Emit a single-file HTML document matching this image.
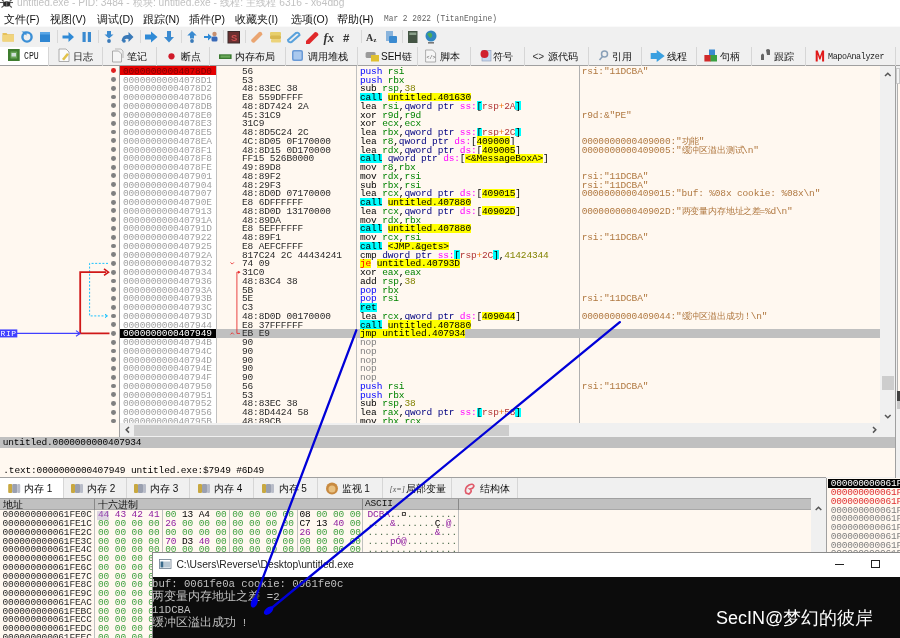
<!DOCTYPE html>
<html><head><meta charset="utf-8">
<style>
*{margin:0;padding:0;box-sizing:border-box}
html,body{width:900px;height:638px;overflow:hidden;background:#f0f0f0;position:relative}
body{font-family:"Liberation Sans",sans-serif;color:#000;filter:blur(0.4px)}
.a{position:absolute}
.mono{font-family:"Liberation Mono",monospace;font-size:9.5px;letter-spacing:-0.15px;white-space:pre;line-height:8.755px}
.row{position:absolute;height:8.755px;white-space:pre}
i{font-style:normal}
.c b{display:inline-block;font-weight:normal;letter-spacing:0}.w555 b{width:5.55px}.w56 b{width:5.6px}.w558 b{width:5.58px}.w55 b{width:5.48px}.w638 b{width:6.375px}
.pp{color:#0000ff}.rg{color:#008300}.v{color:#828200}.sz{color:#000080}.sg{color:#ff00ff}
.sb{}.mr{color:#b03434}.op{color:#f27711}.md{color:#b03434}
.ad{}.cl{}.je{color:#ff0000}.np{color:#808080}
.cmt{color:#b07840}
.ui{white-space:nowrap;color:#111}
.tl{position:absolute;font-size:10px;line-height:12px;white-space:nowrap;color:#111}
.tsep{position:absolute;width:1px;background:#d6d6d6}
.hx{color:#40a040}.hp{color:#9020a0}.hb{color:#000}
</style></head><body>

<div class="a" style="left:0;top:0;width:900px;height:26px;background:#fff"></div>
<div class="a ui" style="left:17px;top:-3.5px;color:#c2c2c2;font-size:10.2px;line-height:12px">untitled.exe - PID: 3484 - <span style="display:inline-block;width:20.40px;white-space:nowrap;letter-spacing:0;">模块</span>: untitled.exe - <span style="display:inline-block;width:20.40px;white-space:nowrap;letter-spacing:0;">线程</span>: <span style="display:inline-block;width:30.60px;white-space:nowrap;letter-spacing:0;">主线程</span> 6316 - x64dbg</div>
<svg class="a" style="left:0;top:0" width="14" height="9"><g stroke="#555" stroke-width="1.1" fill="none"><line x1="0" y1="2.5" x2="13" y2="2.5"/><path d="M4 5.5 l-2.5 2"/><path d="M9.5 5.5 l2.3 2"/><path d="M4 1.5 l-2 -1.5"/><path d="M9.5 1.5 l2 -1.5"/></g><ellipse cx="6.7" cy="3.9" rx="3.6" ry="2.7" fill="#2a2a2a"/><line x1="6.7" y1="1.5" x2="6.7" y2="6.3" stroke="#999" stroke-width="0.7"/></svg>
<div class="a ui" style="left:4px;top:12.5px;font-size:10.5px;line-height:12px"><span style="display:inline-block;width:22.00px;white-space:nowrap;letter-spacing:0;">文件</span>(F)</div>
<div class="a ui" style="left:50px;top:12.5px;font-size:10.5px;line-height:12px"><span style="display:inline-block;width:22.00px;white-space:nowrap;letter-spacing:0;">视图</span>(V)</div>
<div class="a ui" style="left:97px;top:12.5px;font-size:10.5px;line-height:12px"><span style="display:inline-block;width:22.00px;white-space:nowrap;letter-spacing:0;">调试</span>(D)</div>
<div class="a ui" style="left:143px;top:12.5px;font-size:10.5px;line-height:12px"><span style="display:inline-block;width:22.00px;white-space:nowrap;letter-spacing:0;">跟踪</span>(N)</div>
<div class="a ui" style="left:189px;top:12.5px;font-size:10.5px;line-height:12px"><span style="display:inline-block;width:22.00px;white-space:nowrap;letter-spacing:0;">插件</span>(P)</div>
<div class="a ui" style="left:235px;top:12.5px;font-size:10.5px;line-height:12px"><span style="display:inline-block;width:33.00px;white-space:nowrap;letter-spacing:0;">收藏夹</span>(I)</div>
<div class="a ui" style="left:291px;top:12.5px;font-size:10.5px;line-height:12px"><span style="display:inline-block;width:22.00px;white-space:nowrap;letter-spacing:0;">选项</span>(O)</div>
<div class="a ui" style="left:337px;top:12.5px;font-size:10.5px;line-height:12px"><span style="display:inline-block;width:22.00px;white-space:nowrap;letter-spacing:0;">帮助</span>(H)</div>
<div class="a" style="left:384px;top:12.5px;font-family:'Liberation Mono';font-size:9.8px;line-height:11px;color:#606060;white-space:pre;transform:scaleX(0.8);transform-origin:0 0">Mar 2 2022 (TitanEngine)</div>
<div class="a" style="left:0;top:25.5px;width:900px;height:21px;background:#f0f0f0;border-top:1px solid #fafafa;border-bottom:1px solid #d2d2d2"></div>
<div class="a" style="left:56.7px;top:30px;width:1px;height:13px;background:#d8d8d8"></div>
<div class="a" style="left:98px;top:30px;width:1px;height:13px;background:#d8d8d8"></div>
<div class="a" style="left:139.5px;top:30px;width:1px;height:13px;background:#d8d8d8"></div>
<div class="a" style="left:181px;top:30px;width:1px;height:13px;background:#d8d8d8"></div>
<div class="a" style="left:223px;top:30px;width:1px;height:13px;background:#d8d8d8"></div>
<div class="a" style="left:245px;top:30px;width:1px;height:13px;background:#d8d8d8"></div>
<div class="a" style="left:361px;top:30px;width:1px;height:13px;background:#d8d8d8"></div>
<div class="a" style="left:402.4px;top:30px;width:1px;height:13px;background:#d8d8d8"></div>
<svg class="a" style="left:0;top:26px" width="450" height="20">
<!-- folder -->
<path d="M2.5 7 h4 l1 1.2 h6.5 v7.3 h-11.5z" fill="#e6c15a"/><path d="M2.5 9 h11.5 v6.5 h-11.5z" fill="#f1d47c"/>
<!-- restart -->
<circle cx="27" cy="11" r="4.6" fill="none" stroke="#3b8fd6" stroke-width="2.4"/><path d="M21.5 5.5 h5 v4z" fill="#3b8fd6"/>
<!-- stop -->
<rect x="40" y="6" width="10" height="10" fill="#2f86d2"/><rect x="40" y="6" width="10" height="2.5" fill="#5aa6e6"/>
<!-- run arrow -->
<path d="M62.5 9.5 h6 v-3.5 l5.5 5 l-5.5 5 v-3.5 h-6z" fill="#2f8ad6"/>
<!-- pause -->
<rect x="82.5" y="6" width="3.2" height="10" fill="#3a8ad0"/><rect x="87.8" y="6" width="3.2" height="10" fill="#3a8ad0"/>
<!-- step into -->
<path d="M107 5 h4 v3.5 h2.5 l-4.5 4 l-4.5-4 h2.5z" fill="#3a8ad0"/><circle cx="109" cy="15" r="1.9" fill="#3a7ab8"/>
<!-- step over -->
<path d="M121.5 15 q1-7 7-6 v-3 l5 5 l-5 5 v-3 q-4-1-5 2z" fill="#3a7ab8"/><circle cx="124" cy="15" r="1.8" fill="#3a7ab8"/>
<!-- fat right arrow -->
<path d="M145 8.5 h6 v-3 l6.5 5.5 l-6.5 5.5 v-3 h-6z" fill="#2f8ad6"/>
<!-- down arrow -->
<path d="M167 5 h4 v6 h3 l-5 5.5 l-5-5.5 h3z" fill="#3a8ad0"/>
<!-- up arrow dot -->
<path d="M192 5 l4.7 4.5 h-2.7 v3 h-4 v-3 h-2.7z" fill="#3a8ad0"/><circle cx="192" cy="15" r="1.9" fill="#3a7ab8"/>
<!-- arrow person -->
<path d="M204 10 h4 v-2.5 l4 3.5 l-4 3.5 v-2.5 h-4z" fill="#2f8ad6"/><circle cx="214.5" cy="8" r="2.2" fill="#c89070"/><rect x="211.5" y="10.5" width="6" height="5" rx="1.5" fill="#3a6ab8"/>
<!-- S square -->
<rect x="227.5" y="5" width="12.5" height="12.5" fill="#3a2a2a"/><rect x="228.5" y="6" width="10.5" height="10.5" fill="#6a3030"/><text x="231" y="15" font-family="Liberation Sans" font-weight="bold" font-size="9.5" fill="#d05050">S</text>
<!-- bandage -->
<path d="M251 14 l8-8 q3-1 3.5 2.5 l-8 8 q-3 1-3.5-2.5z" fill="#eaa571"/>
<!-- notes -->
<rect x="270" y="6" width="11" height="4" rx="1" fill="#e7cf6b"/><rect x="270" y="9.5" width="11" height="3.5" rx="1" fill="#d8b850"/><rect x="271" y="13" width="10" height="3.5" rx="1" fill="#ecd37a"/>
<!-- paperclip -->
<path d="M288 14 l8-7 q3-1 3.5 2 l-8 7 q-3 1-3.5-2z" fill="none" stroke="#5aa2dc" stroke-width="2"/>
<!-- red pencil -->
<path d="M306 15 l9-9 q3 0 3.5 3 l-9 9 h-3.5z" fill="#e0282a"/>
<!-- fx -->
<text x="323.5" y="15.5" font-family="Liberation Serif" font-style="italic" font-weight="bold" font-size="12.5" fill="#333">fx</text>
<!-- # -->
<text x="343" y="15.5" font-family="Liberation Sans" font-weight="bold" font-size="11.5" fill="#333">#</text>
<!-- A2 -->
<text x="366" y="15" font-family="Liberation Serif" font-weight="bold" font-size="10" fill="#333">A</text><text x="373.5" y="15.5" font-family="Liberation Serif" font-weight="bold" font-size="6.5" fill="#333">z</text>
<!-- doc -->
<rect x="386" y="5" width="7" height="10" fill="#8ab4dc"/><rect x="389" y="10" width="8" height="7" rx="1" fill="#3a8ad0"/>
<!-- calc -->
<rect x="408" y="5" width="9.5" height="12" fill="#445544"/><rect x="409.3" y="6.5" width="7" height="2.5" fill="#8aa08a"/>
<!-- globe -->
<circle cx="431" cy="10" r="5.5" fill="#2f86c2"/><path d="M427 8 q3-3 5 0 q1 3 -2 4z" fill="#4aaa5a"/><rect x="428" y="16" width="6" height="1.6" fill="#777"/>
</svg>
<div class="a" style="left:0;top:46.3px;width:900px;height:20px;background:#f0f0f0;border-bottom:1px solid #a0a0a0"></div>
<div class="a" style="left:0;top:47px;width:48px;height:18.4px;background:#fff"></div>
<div class="tsep" style="left:48px;top:47px;height:19px"></div>
<div class="tsep" style="left:102px;top:47px;height:19px"></div>
<div class="tsep" style="left:155.5px;top:47px;height:19px"></div>
<div class="tsep" style="left:208.5px;top:47px;height:19px"></div>
<div class="tsep" style="left:285px;top:47px;height:19px"></div>
<div class="tsep" style="left:356.7px;top:47px;height:19px"></div>
<div class="tsep" style="left:416.7px;top:47px;height:19px"></div>
<div class="tsep" style="left:470px;top:47px;height:19px"></div>
<div class="tsep" style="left:524px;top:47px;height:19px"></div>
<div class="tsep" style="left:587.5px;top:47px;height:19px"></div>
<div class="tsep" style="left:641.3px;top:47px;height:19px"></div>
<div class="tsep" style="left:696px;top:47px;height:19px"></div>
<div class="tsep" style="left:751px;top:47px;height:19px"></div>
<div class="tsep" style="left:804.7px;top:47px;height:19px"></div>
<div class="tsep" style="left:895px;top:47px;height:19px"></div>
<div class="tl" style="left:73.3px;top:50.5px"><span style="display:inline-block;width:20.00px;white-space:nowrap;letter-spacing:0;">日志</span></div>
<div class="tl" style="left:127.2px;top:50.5px"><span style="display:inline-block;width:20.00px;white-space:nowrap;letter-spacing:0;">笔记</span></div>
<div class="tl" style="left:180.5px;top:50.5px"><span style="display:inline-block;width:20.00px;white-space:nowrap;letter-spacing:0;">断点</span></div>
<div class="tl" style="left:235px;top:50.5px"><span style="display:inline-block;width:40.00px;white-space:nowrap;letter-spacing:0;">内存布局</span></div>
<div class="tl" style="left:307.8px;top:50.5px"><span style="display:inline-block;width:40.00px;white-space:nowrap;letter-spacing:0;">调用堆栈</span></div>
<div class="tl" style="left:381px;top:50.5px">SEH<span style="display:inline-block;width:10.00px;white-space:nowrap;letter-spacing:0;">链</span></div>
<div class="tl" style="left:440px;top:50.5px"><span style="display:inline-block;width:20.00px;white-space:nowrap;letter-spacing:0;">脚本</span></div>
<div class="tl" style="left:493.3px;top:50.5px"><span style="display:inline-block;width:20.00px;white-space:nowrap;letter-spacing:0;">符号</span></div>
<div class="tl" style="left:548px;top:50.5px"><span style="display:inline-block;width:30.00px;white-space:nowrap;letter-spacing:0;">源代码</span></div>
<div class="tl" style="left:612px;top:50.5px"><span style="display:inline-block;width:20.00px;white-space:nowrap;letter-spacing:0;">引用</span></div>
<div class="tl" style="left:666.7px;top:50.5px"><span style="display:inline-block;width:20.00px;white-space:nowrap;letter-spacing:0;">线程</span></div>
<div class="tl" style="left:720px;top:50.5px"><span style="display:inline-block;width:20.00px;white-space:nowrap;letter-spacing:0;">句柄</span></div>
<div class="tl" style="left:774px;top:50.5px"><span style="display:inline-block;width:20.00px;white-space:nowrap;letter-spacing:0;">跟踪</span></div>
<div class="a" style="left:23.5px;top:51px;font-family:'Liberation Mono';font-size:10.5px;line-height:11px;color:#222;transform:scaleX(0.78);transform-origin:0 0;white-space:pre">CPU</div>
<div class="a" style="left:828px;top:51.5px;font-family:'Liberation Mono';font-size:8.4px;line-height:10px;color:#222;white-space:pre;letter-spacing:-0.35px">MapoAnalyzer</div>
<svg class="a" style="left:0;top:46px" width="900" height="20">
<rect x="8" y="3" width="11.7" height="12" fill="#3e7d2e"/><rect x="10.5" y="5.5" width="6.7" height="7" fill="#6aa55a"/><rect x="11.5" y="7" width="4.5" height="3.5" fill="#cfe0d8"/>
<path d="M59 3 h7 l3 3 v9.5 h-10z" fill="#fbfbfb" stroke="#9a9a9a" stroke-width="0.8"/><path d="M62 13 l5-6 l2 1.5 l-5 6z" fill="#e2c24a"/>
<path d="M112.5 5 h6 l3 3 v8 h-9z" fill="#f6f6f6" stroke="#9a9a9a" stroke-width="0.8"/><path d="M115 3 h6 l2 2 v7" fill="none" stroke="#aaa" stroke-width="0.8"/>
<circle cx="171.5" cy="10.3" r="3.1" fill="#d01a2a"/>
<rect x="219" y="8.3" width="12.6" height="4.7" fill="#3a7a30"/><rect x="220.5" y="9.5" width="9.6" height="2.2" fill="#6aa85a"/>
<rect x="292" y="4" width="11" height="11" rx="2" fill="#6a9ad6"/><rect x="293.5" y="5.5" width="8" height="8" rx="1" fill="#a9c8ee"/>
<rect x="365.6" y="6" width="10" height="6" rx="1.5" fill="#9a9a9a"/><rect x="371" y="9" width="8" height="6.5" fill="#e0c030"/>
<path d="M425.6 4 h7 l3 3 v9 h-10z" fill="#f6f6f6" stroke="#9a9a9a" stroke-width="0.8"/><text x="426.5" y="13" font-size="5" font-family="Liberation Mono" fill="#555">&lt;/&gt;</text>
<rect x="482" y="4.5" width="9" height="10.5" fill="#c8d8ee" stroke="#8a9ab8" stroke-width="0.6"/><circle cx="484.5" cy="8" r="4" fill="#d02030"/>
<text x="532.5" y="14" font-size="10" font-family="Liberation Sans" fill="#333">&lt;&gt;</text>
<circle cx="604.5" cy="8" r="3" fill="none" stroke="#8aa0b8" stroke-width="1.5"/><line x1="602.5" y1="10.5" x2="599.5" y2="14" stroke="#8aa0b8" stroke-width="1.6"/>
<path d="M650.7 7 h6 v-3 l8 6 l-8 6 v-3 h-6z" fill="#3aa0e0"/>
<rect x="709" y="3.5" width="6" height="6" fill="#3a8ad0"/><rect x="704.4" y="9" width="6.5" height="6.5" fill="#d02a2a"/><rect x="710.5" y="9" width="6.5" height="6.5" fill="#3aa040"/>
<path d="M761 9 q2-3 3 0 v5 h-3z M766 4 q2-2 4 0 v5 h-3z" fill="#666"/>
<path d="M815.7 15.5 v-11 h2 l2.2 6 l2.2-6 h2 v11 h-2 v-7 l-1.6 5 h-1.2 l-1.6-5 v7z" fill="#e01818"/>
</svg>
<div class="a" style="left:0;top:66.4px;width:880px;height:357.2px;background:#fff8f0"></div>
<div class="a" style="left:120px;top:66.4px;width:95.8px;height:357.2px;background:#fff"></div>
<div class="a" style="left:215.8px;top:66.4px;width:1px;height:357.2px;background:#c0c0c0"></div>
<div class="a" style="left:356px;top:66.4px;width:1px;height:357.2px;background:#c0c0c0"></div>
<div class="a" style="left:579px;top:66.4px;width:1px;height:357.2px;background:#b0b0b0"></div>
<div class="a" style="left:0;top:423px;width:119px;height:14.2px;background:#fff8f0"></div>
<div class="a" style="left:119px;top:66.4px;width:1px;height:371px;background:#a0a0a0"></div>
<div class="a" style="left:120px;top:66.40px;width:95.8px;height:8.76px;background:#e40000"></div>
<div class="row mono c w555" style="left:123px;top:67.80px;color:#800000"><b>0</b><b>0</b><b>0</b><b>0</b><b>0</b><b>0</b><b>0</b><b>0</b><b>0</b><b>0</b><b>4</b><b>0</b><b>7</b><b>8</b><b>D</b><b>0</b></div>
<div class="row mono c w555" style="left:242px;top:67.80px;color:#2a2a2a"><b>5</b><b>6</b></div>
<div class="row mono c w555" style="left:360px;top:67.80px"><i class="pp"><b>p</b><b>u</b><b>s</b><b>h</b></i><b> </b><i class="rg"><b>r</b><b>s</b><b>i</b></i></div>
<div class="row mono cmt c w555" style="left:581.7px;top:67.80px"><b>r</b><b>s</b><b>i</b><b>:</b><b>"</b><b>1</b><b>1</b><b>D</b><b>C</b><b>B</b><b>A</b><b>"</b></div>
<div class="a" style="left:110.9px;top:68.40px;width:4.8px;height:4.8px;border-radius:50%;background:#e02020"></div>
<div class="row mono c w555" style="left:123px;top:76.56px;color:#a0a0a0"><b>0</b><b>0</b><b>0</b><b>0</b><b>0</b><b>0</b><b>0</b><b>0</b><b>0</b><b>0</b><b>4</b><b>0</b><b>7</b><b>8</b><b>D</b><b>1</b></div>
<div class="row mono c w555" style="left:242px;top:76.56px;color:#2a2a2a"><b>5</b><b>3</b></div>
<div class="row mono c w555" style="left:360px;top:76.56px"><i class="pp"><b>p</b><b>u</b><b>s</b><b>h</b></i><b> </b><i class="rg"><b>r</b><b>b</b><b>x</b></i></div>
<div class="a" style="left:110.9px;top:77.16px;width:4.8px;height:4.8px;border-radius:50%;background:#808080"></div>
<div class="row mono c w555" style="left:123px;top:85.31px;color:#a0a0a0"><b>0</b><b>0</b><b>0</b><b>0</b><b>0</b><b>0</b><b>0</b><b>0</b><b>0</b><b>0</b><b>4</b><b>0</b><b>7</b><b>8</b><b>D</b><b>2</b></div>
<div class="row mono c w555" style="left:242px;top:85.31px;color:#2a2a2a"><b>4</b><b>8</b><b>:</b><b>8</b><b>3</b><b>E</b><b>C</b><b> </b><b>3</b><b>8</b></div>
<div class="row mono c w555" style="left:360px;top:85.31px"><b>s</b><b>u</b><b>b</b><b> </b><i class="rg"><b>r</b><b>s</b><b>p</b></i><b>,</b><i class="v"><b>3</b><b>8</b></i></div>
<div class="a" style="left:110.9px;top:85.91px;width:4.8px;height:4.8px;border-radius:50%;background:#808080"></div>
<div class="row mono c w555" style="left:123px;top:94.07px;color:#a0a0a0"><b>0</b><b>0</b><b>0</b><b>0</b><b>0</b><b>0</b><b>0</b><b>0</b><b>0</b><b>0</b><b>4</b><b>0</b><b>7</b><b>8</b><b>D</b><b>6</b></div>
<div class="row mono c w555" style="left:242px;top:94.07px;color:#2a2a2a"><b>E</b><b>8</b><b> </b><b>5</b><b>5</b><b>9</b><b>D</b><b>F</b><b>F</b><b>F</b><b>F</b></div>
<div class="a" style="left:360.00px;top:92.67px;width:22.20px;height:8.76px;background:#00ffff"></div>
<div class="a" style="left:387.75px;top:92.67px;width:83.25px;height:8.76px;background:#ffff00"></div>
<div class="row mono c w555" style="left:360px;top:94.07px"><i class="cl"><b>c</b><b>a</b><b>l</b><b>l</b></i><b> </b><i class="ad"><b>u</b><b>n</b><b>t</b><b>i</b><b>t</b><b>l</b><b>e</b><b>d</b><b>.</b><b>4</b><b>0</b><b>1</b><b>6</b><b>3</b><b>0</b></i></div>
<div class="a" style="left:110.9px;top:94.67px;width:4.8px;height:4.8px;border-radius:50%;background:#808080"></div>
<div class="row mono c w555" style="left:123px;top:102.82px;color:#a0a0a0"><b>0</b><b>0</b><b>0</b><b>0</b><b>0</b><b>0</b><b>0</b><b>0</b><b>0</b><b>0</b><b>4</b><b>0</b><b>7</b><b>8</b><b>D</b><b>B</b></div>
<div class="row mono c w555" style="left:242px;top:102.82px;color:#2a2a2a"><b>4</b><b>8</b><b>:</b><b>8</b><b>D</b><b>7</b><b>4</b><b>2</b><b>4</b><b> </b><b>2</b><b>A</b></div>
<div class="a" style="left:476.55px;top:101.42px;width:5.55px;height:8.76px;background:#00ffff"></div>
<div class="a" style="left:515.40px;top:101.42px;width:5.55px;height:8.76px;background:#00ffff"></div>
<div class="row mono c w555" style="left:360px;top:102.82px"><b>l</b><b>e</b><b>a</b><b> </b><i class="rg"><b>r</b><b>s</b><b>i</b></i><b>,</b><i class="sz"><b>q</b><b>w</b><b>o</b><b>r</b><b>d</b><b> </b><b>p</b><b>t</b><b>r</b></i><b> </b><i class="sg"><b>s</b><b>s</b><b>:</b></i><i class="sb"><b>[</b></i><i class="mr"><b>r</b><b>s</b><b>p</b></i><i class="op"><b>+</b></i><i class="md"><b>2</b><b>A</b></i><i class="sb"><b>]</b></i></div>
<div class="a" style="left:110.9px;top:103.42px;width:4.8px;height:4.8px;border-radius:50%;background:#808080"></div>
<div class="row mono c w555" style="left:123px;top:111.58px;color:#a0a0a0"><b>0</b><b>0</b><b>0</b><b>0</b><b>0</b><b>0</b><b>0</b><b>0</b><b>0</b><b>0</b><b>4</b><b>0</b><b>7</b><b>8</b><b>E</b><b>0</b></div>
<div class="row mono c w555" style="left:242px;top:111.58px;color:#2a2a2a"><b>4</b><b>5</b><b>:</b><b>3</b><b>1</b><b>C</b><b>9</b></div>
<div class="row mono c w555" style="left:360px;top:111.58px"><b>x</b><b>o</b><b>r</b><b> </b><i class="rg"><b>r</b><b>9</b><b>d</b></i><b>,</b><i class="rg"><b>r</b><b>9</b><b>d</b></i></div>
<div class="row mono cmt c w555" style="left:581.7px;top:111.58px"><b>r</b><b>9</b><b>d</b><b>:</b><b>&amp;</b><b>"</b><b>P</b><b>E</b><b>"</b></div>
<div class="a" style="left:110.9px;top:112.18px;width:4.8px;height:4.8px;border-radius:50%;background:#808080"></div>
<div class="row mono c w555" style="left:123px;top:120.33px;color:#a0a0a0"><b>0</b><b>0</b><b>0</b><b>0</b><b>0</b><b>0</b><b>0</b><b>0</b><b>0</b><b>0</b><b>4</b><b>0</b><b>7</b><b>8</b><b>E</b><b>3</b></div>
<div class="row mono c w555" style="left:242px;top:120.33px;color:#2a2a2a"><b>3</b><b>1</b><b>C</b><b>9</b></div>
<div class="row mono c w555" style="left:360px;top:120.33px"><b>x</b><b>o</b><b>r</b><b> </b><i class="rg"><b>e</b><b>c</b><b>x</b></i><b>,</b><i class="rg"><b>e</b><b>c</b><b>x</b></i></div>
<div class="a" style="left:110.9px;top:120.93px;width:4.8px;height:4.8px;border-radius:50%;background:#808080"></div>
<div class="row mono c w555" style="left:123px;top:129.09px;color:#a0a0a0"><b>0</b><b>0</b><b>0</b><b>0</b><b>0</b><b>0</b><b>0</b><b>0</b><b>0</b><b>0</b><b>4</b><b>0</b><b>7</b><b>8</b><b>E</b><b>5</b></div>
<div class="row mono c w555" style="left:242px;top:129.09px;color:#2a2a2a"><b>4</b><b>8</b><b>:</b><b>8</b><b>D</b><b>5</b><b>C</b><b>2</b><b>4</b><b> </b><b>2</b><b>C</b></div>
<div class="a" style="left:476.55px;top:127.69px;width:5.55px;height:8.76px;background:#00ffff"></div>
<div class="a" style="left:515.40px;top:127.69px;width:5.55px;height:8.76px;background:#00ffff"></div>
<div class="row mono c w555" style="left:360px;top:129.09px"><b>l</b><b>e</b><b>a</b><b> </b><i class="rg"><b>r</b><b>b</b><b>x</b></i><b>,</b><i class="sz"><b>q</b><b>w</b><b>o</b><b>r</b><b>d</b><b> </b><b>p</b><b>t</b><b>r</b></i><b> </b><i class="sg"><b>s</b><b>s</b><b>:</b></i><i class="sb"><b>[</b></i><i class="mr"><b>r</b><b>s</b><b>p</b></i><i class="op"><b>+</b></i><i class="md"><b>2</b><b>C</b></i><i class="sb"><b>]</b></i></div>
<div class="a" style="left:110.9px;top:129.69px;width:4.8px;height:4.8px;border-radius:50%;background:#808080"></div>
<div class="row mono c w555" style="left:123px;top:137.84px;color:#a0a0a0"><b>0</b><b>0</b><b>0</b><b>0</b><b>0</b><b>0</b><b>0</b><b>0</b><b>0</b><b>0</b><b>4</b><b>0</b><b>7</b><b>8</b><b>E</b><b>A</b></div>
<div class="row mono c w555" style="left:242px;top:137.84px;color:#2a2a2a"><b>4</b><b>C</b><b>:</b><b>8</b><b>D</b><b>0</b><b>5</b><b> </b><b>0</b><b>F</b><b>1</b><b>7</b><b>0</b><b>0</b><b>0</b><b>0</b></div>
<div class="a" style="left:476.55px;top:136.44px;width:33.30px;height:8.76px;background:#ffff00"></div>
<div class="row mono c w555" style="left:360px;top:137.84px"><b>l</b><b>e</b><b>a</b><b> </b><i class="rg"><b>r</b><b>8</b></i><b>,</b><i class="sz"><b>q</b><b>w</b><b>o</b><b>r</b><b>d</b><b> </b><b>p</b><b>t</b><b>r</b></i><b> </b><i class="sg"><b>d</b><b>s</b><b>:</b></i><b>[</b><i class="ad"><b>4</b><b>0</b><b>9</b><b>0</b><b>0</b><b>0</b></i><b>]</b></div>
<div class="row mono cmt c w555" style="left:581.7px;top:137.84px"><b>0</b><b>0</b><b>0</b><b>0</b><b>0</b><b>0</b><b>0</b><b>0</b><b>0</b><b>0</b><b>4</b><b>0</b><b>9</b><b>0</b><b>0</b><b>0</b><b>:</b><b>"</b><span style="display:inline-block;width:17.30px;white-space:nowrap;font-size:8.6px">功能</span><b>"</b></div>
<div class="a" style="left:110.9px;top:138.44px;width:4.8px;height:4.8px;border-radius:50%;background:#808080"></div>
<div class="row mono c w555" style="left:123px;top:146.59px;color:#a0a0a0"><b>0</b><b>0</b><b>0</b><b>0</b><b>0</b><b>0</b><b>0</b><b>0</b><b>0</b><b>0</b><b>4</b><b>0</b><b>7</b><b>8</b><b>F</b><b>1</b></div>
<div class="row mono c w555" style="left:242px;top:146.59px;color:#2a2a2a"><b>4</b><b>8</b><b>:</b><b>8</b><b>D</b><b>1</b><b>5</b><b> </b><b>0</b><b>D</b><b>1</b><b>7</b><b>0</b><b>0</b><b>0</b><b>0</b></div>
<div class="a" style="left:482.10px;top:145.19px;width:33.30px;height:8.76px;background:#ffff00"></div>
<div class="row mono c w555" style="left:360px;top:146.59px"><b>l</b><b>e</b><b>a</b><b> </b><i class="rg"><b>r</b><b>d</b><b>x</b></i><b>,</b><i class="sz"><b>q</b><b>w</b><b>o</b><b>r</b><b>d</b><b> </b><b>p</b><b>t</b><b>r</b></i><b> </b><i class="sg"><b>d</b><b>s</b><b>:</b></i><b>[</b><i class="ad"><b>4</b><b>0</b><b>9</b><b>0</b><b>0</b><b>5</b></i><b>]</b></div>
<div class="row mono cmt c w555" style="left:581.7px;top:146.59px"><b>0</b><b>0</b><b>0</b><b>0</b><b>0</b><b>0</b><b>0</b><b>0</b><b>0</b><b>0</b><b>4</b><b>0</b><b>9</b><b>0</b><b>0</b><b>5</b><b>:</b><b>"</b><span style="display:inline-block;width:60.55px;white-space:nowrap;font-size:8.6px">缓冲区溢出测试</span><b>\</b><b>n</b><b>"</b></div>
<div class="a" style="left:110.9px;top:147.19px;width:4.8px;height:4.8px;border-radius:50%;background:#808080"></div>
<div class="row mono c w555" style="left:123px;top:155.35px;color:#a0a0a0"><b>0</b><b>0</b><b>0</b><b>0</b><b>0</b><b>0</b><b>0</b><b>0</b><b>0</b><b>0</b><b>4</b><b>0</b><b>7</b><b>8</b><b>F</b><b>8</b></div>
<div class="row mono c w555" style="left:242px;top:155.35px;color:#2a2a2a"><b>F</b><b>F</b><b>1</b><b>5</b><b> </b><b>5</b><b>2</b><b>6</b><b>B</b><b>0</b><b>0</b><b>0</b><b>0</b></div>
<div class="a" style="left:360.00px;top:153.95px;width:22.20px;height:8.76px;background:#00ffff"></div>
<div class="a" style="left:465.45px;top:153.95px;width:77.70px;height:8.76px;background:#ffff00"></div>
<div class="row mono c w555" style="left:360px;top:155.35px"><i class="cl"><b>c</b><b>a</b><b>l</b><b>l</b></i><b> </b><i class="sz"><b>q</b><b>w</b><b>o</b><b>r</b><b>d</b><b> </b><b>p</b><b>t</b><b>r</b></i><b> </b><i class="sg"><b>d</b><b>s</b><b>:</b></i><b>[</b><i class="ad"><b>&lt;</b><b>&amp;</b><b>M</b><b>e</b><b>s</b><b>s</b><b>a</b><b>g</b><b>e</b><b>B</b><b>o</b><b>x</b><b>A</b><b>&gt;</b></i><b>]</b></div>
<div class="a" style="left:110.9px;top:155.95px;width:4.8px;height:4.8px;border-radius:50%;background:#808080"></div>
<div class="row mono c w555" style="left:123px;top:164.11px;color:#a0a0a0"><b>0</b><b>0</b><b>0</b><b>0</b><b>0</b><b>0</b><b>0</b><b>0</b><b>0</b><b>0</b><b>4</b><b>0</b><b>7</b><b>8</b><b>F</b><b>E</b></div>
<div class="row mono c w555" style="left:242px;top:164.11px;color:#2a2a2a"><b>4</b><b>9</b><b>:</b><b>8</b><b>9</b><b>D</b><b>8</b></div>
<div class="row mono c w555" style="left:360px;top:164.11px"><b>m</b><b>o</b><b>v</b><b> </b><i class="rg"><b>r</b><b>8</b></i><b>,</b><i class="rg"><b>r</b><b>b</b><b>x</b></i></div>
<div class="a" style="left:110.9px;top:164.71px;width:4.8px;height:4.8px;border-radius:50%;background:#808080"></div>
<div class="row mono c w555" style="left:123px;top:172.86px;color:#a0a0a0"><b>0</b><b>0</b><b>0</b><b>0</b><b>0</b><b>0</b><b>0</b><b>0</b><b>0</b><b>0</b><b>4</b><b>0</b><b>7</b><b>9</b><b>0</b><b>1</b></div>
<div class="row mono c w555" style="left:242px;top:172.86px;color:#2a2a2a"><b>4</b><b>8</b><b>:</b><b>8</b><b>9</b><b>F</b><b>2</b></div>
<div class="row mono c w555" style="left:360px;top:172.86px"><b>m</b><b>o</b><b>v</b><b> </b><i class="rg"><b>r</b><b>d</b><b>x</b></i><b>,</b><i class="rg"><b>r</b><b>s</b><b>i</b></i></div>
<div class="row mono cmt c w555" style="left:581.7px;top:172.86px"><b>r</b><b>s</b><b>i</b><b>:</b><b>"</b><b>1</b><b>1</b><b>D</b><b>C</b><b>B</b><b>A</b><b>"</b></div>
<div class="a" style="left:110.9px;top:173.46px;width:4.8px;height:4.8px;border-radius:50%;background:#808080"></div>
<div class="row mono c w555" style="left:123px;top:181.62px;color:#a0a0a0"><b>0</b><b>0</b><b>0</b><b>0</b><b>0</b><b>0</b><b>0</b><b>0</b><b>0</b><b>0</b><b>4</b><b>0</b><b>7</b><b>9</b><b>0</b><b>4</b></div>
<div class="row mono c w555" style="left:242px;top:181.62px;color:#2a2a2a"><b>4</b><b>8</b><b>:</b><b>2</b><b>9</b><b>F</b><b>3</b></div>
<div class="row mono c w555" style="left:360px;top:181.62px"><b>s</b><b>u</b><b>b</b><b> </b><i class="rg"><b>r</b><b>b</b><b>x</b></i><b>,</b><i class="rg"><b>r</b><b>s</b><b>i</b></i></div>
<div class="row mono cmt c w555" style="left:581.7px;top:181.62px"><b>r</b><b>s</b><b>i</b><b>:</b><b>"</b><b>1</b><b>1</b><b>D</b><b>C</b><b>B</b><b>A</b><b>"</b></div>
<div class="a" style="left:110.9px;top:182.22px;width:4.8px;height:4.8px;border-radius:50%;background:#808080"></div>
<div class="row mono c w555" style="left:123px;top:190.37px;color:#a0a0a0"><b>0</b><b>0</b><b>0</b><b>0</b><b>0</b><b>0</b><b>0</b><b>0</b><b>0</b><b>0</b><b>4</b><b>0</b><b>7</b><b>9</b><b>0</b><b>7</b></div>
<div class="row mono c w555" style="left:242px;top:190.37px;color:#2a2a2a"><b>4</b><b>8</b><b>:</b><b>8</b><b>D</b><b>0</b><b>D</b><b> </b><b>0</b><b>7</b><b>1</b><b>7</b><b>0</b><b>0</b><b>0</b><b>0</b></div>
<div class="a" style="left:482.10px;top:188.97px;width:33.30px;height:8.76px;background:#ffff00"></div>
<div class="row mono c w555" style="left:360px;top:190.37px"><b>l</b><b>e</b><b>a</b><b> </b><i class="rg"><b>r</b><b>c</b><b>x</b></i><b>,</b><i class="sz"><b>q</b><b>w</b><b>o</b><b>r</b><b>d</b><b> </b><b>p</b><b>t</b><b>r</b></i><b> </b><i class="sg"><b>d</b><b>s</b><b>:</b></i><b>[</b><i class="ad"><b>4</b><b>0</b><b>9</b><b>0</b><b>1</b><b>5</b></i><b>]</b></div>
<div class="row mono cmt c w555" style="left:581.7px;top:190.37px"><b>0</b><b>0</b><b>0</b><b>0</b><b>0</b><b>0</b><b>0</b><b>0</b><b>0</b><b>0</b><b>4</b><b>0</b><b>9</b><b>0</b><b>1</b><b>5</b><b>:</b><b>"</b><b>b</b><b>u</b><b>f</b><b>:</b><b> </b><b>%</b><b>0</b><b>8</b><b>x</b><b> </b><b>c</b><b>o</b><b>o</b><b>k</b><b>i</b><b>e</b><b>:</b><b> </b><b>%</b><b>0</b><b>8</b><b>x</b><b>\</b><b>n</b><b>"</b></div>
<div class="a" style="left:110.9px;top:190.97px;width:4.8px;height:4.8px;border-radius:50%;background:#808080"></div>
<div class="row mono c w555" style="left:123px;top:199.13px;color:#a0a0a0"><b>0</b><b>0</b><b>0</b><b>0</b><b>0</b><b>0</b><b>0</b><b>0</b><b>0</b><b>0</b><b>4</b><b>0</b><b>7</b><b>9</b><b>0</b><b>E</b></div>
<div class="row mono c w555" style="left:242px;top:199.13px;color:#2a2a2a"><b>E</b><b>8</b><b> </b><b>6</b><b>D</b><b>F</b><b>F</b><b>F</b><b>F</b><b>F</b><b>F</b></div>
<div class="a" style="left:360.00px;top:197.73px;width:22.20px;height:8.76px;background:#00ffff"></div>
<div class="a" style="left:387.75px;top:197.73px;width:83.25px;height:8.76px;background:#ffff00"></div>
<div class="row mono c w555" style="left:360px;top:199.13px"><i class="cl"><b>c</b><b>a</b><b>l</b><b>l</b></i><b> </b><i class="ad"><b>u</b><b>n</b><b>t</b><b>i</b><b>t</b><b>l</b><b>e</b><b>d</b><b>.</b><b>4</b><b>0</b><b>7</b><b>8</b><b>8</b><b>0</b></i></div>
<div class="a" style="left:110.9px;top:199.73px;width:4.8px;height:4.8px;border-radius:50%;background:#808080"></div>
<div class="row mono c w555" style="left:123px;top:207.88px;color:#a0a0a0"><b>0</b><b>0</b><b>0</b><b>0</b><b>0</b><b>0</b><b>0</b><b>0</b><b>0</b><b>0</b><b>4</b><b>0</b><b>7</b><b>9</b><b>1</b><b>3</b></div>
<div class="row mono c w555" style="left:242px;top:207.88px;color:#2a2a2a"><b>4</b><b>8</b><b>:</b><b>8</b><b>D</b><b>0</b><b>D</b><b> </b><b>1</b><b>3</b><b>1</b><b>7</b><b>0</b><b>0</b><b>0</b><b>0</b></div>
<div class="a" style="left:482.10px;top:206.48px;width:33.30px;height:8.76px;background:#ffff00"></div>
<div class="row mono c w555" style="left:360px;top:207.88px"><b>l</b><b>e</b><b>a</b><b> </b><i class="rg"><b>r</b><b>c</b><b>x</b></i><b>,</b><i class="sz"><b>q</b><b>w</b><b>o</b><b>r</b><b>d</b><b> </b><b>p</b><b>t</b><b>r</b></i><b> </b><i class="sg"><b>d</b><b>s</b><b>:</b></i><b>[</b><i class="ad"><b>4</b><b>0</b><b>9</b><b>0</b><b>2</b><b>D</b></i><b>]</b></div>
<div class="row mono cmt c w555" style="left:581.7px;top:207.88px"><b>0</b><b>0</b><b>0</b><b>0</b><b>0</b><b>0</b><b>0</b><b>0</b><b>0</b><b>0</b><b>4</b><b>0</b><b>9</b><b>0</b><b>2</b><b>D</b><b>:</b><b>"</b><span style="display:inline-block;width:77.85px;white-space:nowrap;font-size:8.6px">两变量内存地址之差</span><b>=</b><b>%</b><b>d</b><b>\</b><b>n</b><b>"</b></div>
<div class="a" style="left:110.9px;top:208.48px;width:4.8px;height:4.8px;border-radius:50%;background:#808080"></div>
<div class="row mono c w555" style="left:123px;top:216.64px;color:#a0a0a0"><b>0</b><b>0</b><b>0</b><b>0</b><b>0</b><b>0</b><b>0</b><b>0</b><b>0</b><b>0</b><b>4</b><b>0</b><b>7</b><b>9</b><b>1</b><b>A</b></div>
<div class="row mono c w555" style="left:242px;top:216.64px;color:#2a2a2a"><b>4</b><b>8</b><b>:</b><b>8</b><b>9</b><b>D</b><b>A</b></div>
<div class="row mono c w555" style="left:360px;top:216.64px"><b>m</b><b>o</b><b>v</b><b> </b><i class="rg"><b>r</b><b>d</b><b>x</b></i><b>,</b><i class="rg"><b>r</b><b>b</b><b>x</b></i></div>
<div class="a" style="left:110.9px;top:217.24px;width:4.8px;height:4.8px;border-radius:50%;background:#808080"></div>
<div class="row mono c w555" style="left:123px;top:225.39px;color:#a0a0a0"><b>0</b><b>0</b><b>0</b><b>0</b><b>0</b><b>0</b><b>0</b><b>0</b><b>0</b><b>0</b><b>4</b><b>0</b><b>7</b><b>9</b><b>1</b><b>D</b></div>
<div class="row mono c w555" style="left:242px;top:225.39px;color:#2a2a2a"><b>E</b><b>8</b><b> </b><b>5</b><b>E</b><b>F</b><b>F</b><b>F</b><b>F</b><b>F</b><b>F</b></div>
<div class="a" style="left:360.00px;top:223.99px;width:22.20px;height:8.76px;background:#00ffff"></div>
<div class="a" style="left:387.75px;top:223.99px;width:83.25px;height:8.76px;background:#ffff00"></div>
<div class="row mono c w555" style="left:360px;top:225.39px"><i class="cl"><b>c</b><b>a</b><b>l</b><b>l</b></i><b> </b><i class="ad"><b>u</b><b>n</b><b>t</b><b>i</b><b>t</b><b>l</b><b>e</b><b>d</b><b>.</b><b>4</b><b>0</b><b>7</b><b>8</b><b>8</b><b>0</b></i></div>
<div class="a" style="left:110.9px;top:225.99px;width:4.8px;height:4.8px;border-radius:50%;background:#808080"></div>
<div class="row mono c w555" style="left:123px;top:234.15px;color:#a0a0a0"><b>0</b><b>0</b><b>0</b><b>0</b><b>0</b><b>0</b><b>0</b><b>0</b><b>0</b><b>0</b><b>4</b><b>0</b><b>7</b><b>9</b><b>2</b><b>2</b></div>
<div class="row mono c w555" style="left:242px;top:234.15px;color:#2a2a2a"><b>4</b><b>8</b><b>:</b><b>8</b><b>9</b><b>F</b><b>1</b></div>
<div class="row mono c w555" style="left:360px;top:234.15px"><b>m</b><b>o</b><b>v</b><b> </b><i class="rg"><b>r</b><b>c</b><b>x</b></i><b>,</b><i class="rg"><b>r</b><b>s</b><b>i</b></i></div>
<div class="row mono cmt c w555" style="left:581.7px;top:234.15px"><b>r</b><b>s</b><b>i</b><b>:</b><b>"</b><b>1</b><b>1</b><b>D</b><b>C</b><b>B</b><b>A</b><b>"</b></div>
<div class="a" style="left:110.9px;top:234.75px;width:4.8px;height:4.8px;border-radius:50%;background:#808080"></div>
<div class="row mono c w555" style="left:123px;top:242.90px;color:#a0a0a0"><b>0</b><b>0</b><b>0</b><b>0</b><b>0</b><b>0</b><b>0</b><b>0</b><b>0</b><b>0</b><b>4</b><b>0</b><b>7</b><b>9</b><b>2</b><b>5</b></div>
<div class="row mono c w555" style="left:242px;top:242.90px;color:#2a2a2a"><b>E</b><b>8</b><b> </b><b>A</b><b>E</b><b>F</b><b>C</b><b>F</b><b>F</b><b>F</b><b>F</b></div>
<div class="a" style="left:360.00px;top:241.50px;width:22.20px;height:8.76px;background:#00ffff"></div>
<div class="a" style="left:387.75px;top:241.50px;width:61.05px;height:8.76px;background:#ffff00"></div>
<div class="row mono c w555" style="left:360px;top:242.90px"><i class="cl"><b>c</b><b>a</b><b>l</b><b>l</b></i><b> </b><i class="ad"><b>&lt;</b><b>J</b><b>M</b><b>P</b><b>.</b><b>&amp;</b><b>g</b><b>e</b><b>t</b><b>s</b><b>&gt;</b></i></div>
<div class="a" style="left:110.9px;top:243.50px;width:4.8px;height:4.8px;border-radius:50%;background:#808080"></div>
<div class="row mono c w555" style="left:123px;top:251.66px;color:#a0a0a0"><b>0</b><b>0</b><b>0</b><b>0</b><b>0</b><b>0</b><b>0</b><b>0</b><b>0</b><b>0</b><b>4</b><b>0</b><b>7</b><b>9</b><b>2</b><b>A</b></div>
<div class="row mono c w555" style="left:242px;top:251.66px;color:#2a2a2a"><b>8</b><b>1</b><b>7</b><b>C</b><b>2</b><b>4</b><b> </b><b>2</b><b>C</b><b> </b><b>4</b><b>4</b><b>4</b><b>3</b><b>4</b><b>2</b><b>4</b><b>1</b></div>
<div class="a" style="left:454.35px;top:250.26px;width:5.55px;height:8.76px;background:#00ffff"></div>
<div class="a" style="left:493.20px;top:250.26px;width:5.55px;height:8.76px;background:#00ffff"></div>
<div class="row mono c w555" style="left:360px;top:251.66px"><b>c</b><b>m</b><b>p</b><b> </b><i class="sz"><b>d</b><b>w</b><b>o</b><b>r</b><b>d</b><b> </b><b>p</b><b>t</b><b>r</b></i><b> </b><i class="sg"><b>s</b><b>s</b><b>:</b></i><i class="sb"><b>[</b></i><i class="mr"><b>r</b><b>s</b><b>p</b></i><i class="op"><b>+</b></i><i class="md"><b>2</b><b>C</b></i><i class="sb"><b>]</b></i><b>,</b><i class="v"><b>4</b><b>1</b><b>4</b><b>2</b><b>4</b><b>3</b><b>4</b><b>4</b></i></div>
<div class="a" style="left:110.9px;top:252.26px;width:4.8px;height:4.8px;border-radius:50%;background:#808080"></div>
<div class="row mono c w555" style="left:123px;top:260.41px;color:#a0a0a0"><b>0</b><b>0</b><b>0</b><b>0</b><b>0</b><b>0</b><b>0</b><b>0</b><b>0</b><b>0</b><b>4</b><b>0</b><b>7</b><b>9</b><b>3</b><b>2</b></div>
<div class="row mono c w555" style="left:242px;top:260.41px;color:#2a2a2a"><b>7</b><b>4</b><b> </b><b>0</b><b>9</b></div>
<div class="a" style="left:360.00px;top:259.01px;width:11.10px;height:8.76px;background:#ffff00"></div>
<div class="a" style="left:376.65px;top:259.01px;width:83.25px;height:8.76px;background:#ffff00"></div>
<div class="row mono c w555" style="left:360px;top:260.41px"><i class="je"><b>j</b><b>e</b></i><i class="ad"><b> </b><b>u</b><b>n</b><b>t</b><b>i</b><b>t</b><b>l</b><b>e</b><b>d</b><b>.</b><b>4</b><b>0</b><b>7</b><b>9</b><b>3</b><b>D</b></i></div>
<div class="a" style="left:110.9px;top:261.01px;width:4.8px;height:4.8px;border-radius:50%;background:#808080"></div>
<div class="row mono c w555" style="left:123px;top:269.16px;color:#a0a0a0"><b>0</b><b>0</b><b>0</b><b>0</b><b>0</b><b>0</b><b>0</b><b>0</b><b>0</b><b>0</b><b>4</b><b>0</b><b>7</b><b>9</b><b>3</b><b>4</b></div>
<div class="row mono c w555" style="left:242px;top:269.16px;color:#2a2a2a"><b>3</b><b>1</b><b>C</b><b>0</b></div>
<div class="row mono c w555" style="left:360px;top:269.16px"><b>x</b><b>o</b><b>r</b><b> </b><i class="rg"><b>e</b><b>a</b><b>x</b></i><b>,</b><i class="rg"><b>e</b><b>a</b><b>x</b></i></div>
<div class="a" style="left:110.9px;top:269.76px;width:4.8px;height:4.8px;border-radius:50%;background:#808080"></div>
<div class="row mono c w555" style="left:123px;top:277.92px;color:#a0a0a0"><b>0</b><b>0</b><b>0</b><b>0</b><b>0</b><b>0</b><b>0</b><b>0</b><b>0</b><b>0</b><b>4</b><b>0</b><b>7</b><b>9</b><b>3</b><b>6</b></div>
<div class="row mono c w555" style="left:242px;top:277.92px;color:#2a2a2a"><b>4</b><b>8</b><b>:</b><b>8</b><b>3</b><b>C</b><b>4</b><b> </b><b>3</b><b>8</b></div>
<div class="row mono c w555" style="left:360px;top:277.92px"><b>a</b><b>d</b><b>d</b><b> </b><i class="rg"><b>r</b><b>s</b><b>p</b></i><b>,</b><i class="v"><b>3</b><b>8</b></i></div>
<div class="a" style="left:110.9px;top:278.52px;width:4.8px;height:4.8px;border-radius:50%;background:#808080"></div>
<div class="row mono c w555" style="left:123px;top:286.68px;color:#a0a0a0"><b>0</b><b>0</b><b>0</b><b>0</b><b>0</b><b>0</b><b>0</b><b>0</b><b>0</b><b>0</b><b>4</b><b>0</b><b>7</b><b>9</b><b>3</b><b>A</b></div>
<div class="row mono c w555" style="left:242px;top:286.68px;color:#2a2a2a"><b>5</b><b>B</b></div>
<div class="row mono c w555" style="left:360px;top:286.68px"><i class="pp"><b>p</b><b>o</b><b>p</b></i><b> </b><i class="rg"><b>r</b><b>b</b><b>x</b></i></div>
<div class="a" style="left:110.9px;top:287.28px;width:4.8px;height:4.8px;border-radius:50%;background:#808080"></div>
<div class="row mono c w555" style="left:123px;top:295.43px;color:#a0a0a0"><b>0</b><b>0</b><b>0</b><b>0</b><b>0</b><b>0</b><b>0</b><b>0</b><b>0</b><b>0</b><b>4</b><b>0</b><b>7</b><b>9</b><b>3</b><b>B</b></div>
<div class="row mono c w555" style="left:242px;top:295.43px;color:#2a2a2a"><b>5</b><b>E</b></div>
<div class="row mono c w555" style="left:360px;top:295.43px"><i class="pp"><b>p</b><b>o</b><b>p</b></i><b> </b><i class="rg"><b>r</b><b>s</b><b>i</b></i></div>
<div class="row mono cmt c w555" style="left:581.7px;top:295.43px"><b>r</b><b>s</b><b>i</b><b>:</b><b>"</b><b>1</b><b>1</b><b>D</b><b>C</b><b>B</b><b>A</b><b>"</b></div>
<div class="a" style="left:110.9px;top:296.03px;width:4.8px;height:4.8px;border-radius:50%;background:#808080"></div>
<div class="row mono c w555" style="left:123px;top:304.19px;color:#a0a0a0"><b>0</b><b>0</b><b>0</b><b>0</b><b>0</b><b>0</b><b>0</b><b>0</b><b>0</b><b>0</b><b>4</b><b>0</b><b>7</b><b>9</b><b>3</b><b>C</b></div>
<div class="row mono c w555" style="left:242px;top:304.19px;color:#2a2a2a"><b>C</b><b>3</b></div>
<div class="a" style="left:360.00px;top:302.79px;width:16.65px;height:8.76px;background:#00ffff"></div>
<div class="row mono c w555" style="left:360px;top:304.19px"><i class="cl"><b>r</b><b>e</b><b>t</b></i></div>
<div class="a" style="left:110.9px;top:304.79px;width:4.8px;height:4.8px;border-radius:50%;background:#808080"></div>
<div class="row mono c w555" style="left:123px;top:312.94px;color:#a0a0a0"><b>0</b><b>0</b><b>0</b><b>0</b><b>0</b><b>0</b><b>0</b><b>0</b><b>0</b><b>0</b><b>4</b><b>0</b><b>7</b><b>9</b><b>3</b><b>D</b></div>
<div class="row mono c w555" style="left:242px;top:312.94px;color:#2a2a2a"><b>4</b><b>8</b><b>:</b><b>8</b><b>D</b><b>0</b><b>D</b><b> </b><b>0</b><b>0</b><b>1</b><b>7</b><b>0</b><b>0</b><b>0</b><b>0</b></div>
<div class="a" style="left:482.10px;top:311.54px;width:33.30px;height:8.76px;background:#ffff00"></div>
<div class="row mono c w555" style="left:360px;top:312.94px"><b>l</b><b>e</b><b>a</b><b> </b><i class="rg"><b>r</b><b>c</b><b>x</b></i><b>,</b><i class="sz"><b>q</b><b>w</b><b>o</b><b>r</b><b>d</b><b> </b><b>p</b><b>t</b><b>r</b></i><b> </b><i class="sg"><b>d</b><b>s</b><b>:</b></i><b>[</b><i class="ad"><b>4</b><b>0</b><b>9</b><b>0</b><b>4</b><b>4</b></i><b>]</b></div>
<div class="row mono cmt c w555" style="left:581.7px;top:312.94px"><b>0</b><b>0</b><b>0</b><b>0</b><b>0</b><b>0</b><b>0</b><b>0</b><b>0</b><b>0</b><b>4</b><b>0</b><b>9</b><b>0</b><b>4</b><b>4</b><b>:</b><b>"</b><span style="display:inline-block;width:69.20px;white-space:nowrap;font-size:8.6px">缓冲区溢出成功！</span><b>\</b><b>n</b><b>"</b></div>
<div class="a" style="left:110.9px;top:313.54px;width:4.8px;height:4.8px;border-radius:50%;background:#808080"></div>
<div class="row mono c w555" style="left:123px;top:321.69px;color:#a0a0a0"><b>0</b><b>0</b><b>0</b><b>0</b><b>0</b><b>0</b><b>0</b><b>0</b><b>0</b><b>0</b><b>4</b><b>0</b><b>7</b><b>9</b><b>4</b><b>4</b></div>
<div class="row mono c w555" style="left:242px;top:321.69px;color:#2a2a2a"><b>E</b><b>8</b><b> </b><b>3</b><b>7</b><b>F</b><b>F</b><b>F</b><b>F</b><b>F</b><b>F</b></div>
<div class="a" style="left:360.00px;top:320.30px;width:22.20px;height:8.76px;background:#00ffff"></div>
<div class="a" style="left:387.75px;top:320.30px;width:83.25px;height:8.76px;background:#ffff00"></div>
<div class="row mono c w555" style="left:360px;top:321.69px"><i class="cl"><b>c</b><b>a</b><b>l</b><b>l</b></i><b> </b><i class="ad"><b>u</b><b>n</b><b>t</b><b>i</b><b>t</b><b>l</b><b>e</b><b>d</b><b>.</b><b>4</b><b>0</b><b>7</b><b>8</b><b>8</b><b>0</b></i></div>
<div class="a" style="left:110.9px;top:322.30px;width:4.8px;height:4.8px;border-radius:50%;background:#808080"></div>
<div class="a" style="left:216.5px;top:329.05px;width:663.5px;height:8.76px;background:#c0c0c0"></div>
<div class="a" style="left:120px;top:329.05px;width:95.8px;height:8.76px;background:#000"></div>
<div class="row mono c w555" style="left:123px;top:330.45px;color:#fff"><b>0</b><b>0</b><b>0</b><b>0</b><b>0</b><b>0</b><b>0</b><b>0</b><b>0</b><b>0</b><b>4</b><b>0</b><b>7</b><b>9</b><b>4</b><b>9</b></div>
<div class="row mono c w555" style="left:242px;top:330.45px;color:#2a2a2a"><b>E</b><b>B</b><b> </b><b>E</b><b>9</b></div>
<div class="a" style="left:360.00px;top:329.05px;width:105.45px;height:8.76px;background:#ffff00"></div>
<div class="row mono c w555" style="left:360px;top:330.45px"><i class="ad"><b>j</b><b>m</b><b>p</b><b> </b><b>u</b><b>n</b><b>t</b><b>i</b><b>t</b><b>l</b><b>e</b><b>d</b><b>.</b><b>4</b><b>0</b><b>7</b><b>9</b><b>3</b><b>4</b></i></div>
<div class="a" style="left:110.9px;top:331.05px;width:4.8px;height:4.8px;border-radius:50%;background:#808080"></div>
<div class="row mono c w555" style="left:123px;top:339.21px;color:#a0a0a0"><b>0</b><b>0</b><b>0</b><b>0</b><b>0</b><b>0</b><b>0</b><b>0</b><b>0</b><b>0</b><b>4</b><b>0</b><b>7</b><b>9</b><b>4</b><b>B</b></div>
<div class="row mono c w555" style="left:242px;top:339.21px;color:#2a2a2a"><b>9</b><b>0</b></div>
<div class="row mono c w555" style="left:360px;top:339.21px"><i class="np"><b>n</b><b>o</b><b>p</b></i></div>
<div class="a" style="left:110.9px;top:339.81px;width:4.8px;height:4.8px;border-radius:50%;background:#808080"></div>
<div class="row mono c w555" style="left:123px;top:347.96px;color:#a0a0a0"><b>0</b><b>0</b><b>0</b><b>0</b><b>0</b><b>0</b><b>0</b><b>0</b><b>0</b><b>0</b><b>4</b><b>0</b><b>7</b><b>9</b><b>4</b><b>C</b></div>
<div class="row mono c w555" style="left:242px;top:347.96px;color:#2a2a2a"><b>9</b><b>0</b></div>
<div class="row mono c w555" style="left:360px;top:347.96px"><i class="np"><b>n</b><b>o</b><b>p</b></i></div>
<div class="a" style="left:110.9px;top:348.56px;width:4.8px;height:4.8px;border-radius:50%;background:#808080"></div>
<div class="row mono c w555" style="left:123px;top:356.72px;color:#a0a0a0"><b>0</b><b>0</b><b>0</b><b>0</b><b>0</b><b>0</b><b>0</b><b>0</b><b>0</b><b>0</b><b>4</b><b>0</b><b>7</b><b>9</b><b>4</b><b>D</b></div>
<div class="row mono c w555" style="left:242px;top:356.72px;color:#2a2a2a"><b>9</b><b>0</b></div>
<div class="row mono c w555" style="left:360px;top:356.72px"><i class="np"><b>n</b><b>o</b><b>p</b></i></div>
<div class="a" style="left:110.9px;top:357.32px;width:4.8px;height:4.8px;border-radius:50%;background:#808080"></div>
<div class="row mono c w555" style="left:123px;top:365.47px;color:#a0a0a0"><b>0</b><b>0</b><b>0</b><b>0</b><b>0</b><b>0</b><b>0</b><b>0</b><b>0</b><b>0</b><b>4</b><b>0</b><b>7</b><b>9</b><b>4</b><b>E</b></div>
<div class="row mono c w555" style="left:242px;top:365.47px;color:#2a2a2a"><b>9</b><b>0</b></div>
<div class="row mono c w555" style="left:360px;top:365.47px"><i class="np"><b>n</b><b>o</b><b>p</b></i></div>
<div class="a" style="left:110.9px;top:366.07px;width:4.8px;height:4.8px;border-radius:50%;background:#808080"></div>
<div class="row mono c w555" style="left:123px;top:374.23px;color:#a0a0a0"><b>0</b><b>0</b><b>0</b><b>0</b><b>0</b><b>0</b><b>0</b><b>0</b><b>0</b><b>0</b><b>4</b><b>0</b><b>7</b><b>9</b><b>4</b><b>F</b></div>
<div class="row mono c w555" style="left:242px;top:374.23px;color:#2a2a2a"><b>9</b><b>0</b></div>
<div class="row mono c w555" style="left:360px;top:374.23px"><i class="np"><b>n</b><b>o</b><b>p</b></i></div>
<div class="a" style="left:110.9px;top:374.83px;width:4.8px;height:4.8px;border-radius:50%;background:#808080"></div>
<div class="row mono c w555" style="left:123px;top:382.98px;color:#a0a0a0"><b>0</b><b>0</b><b>0</b><b>0</b><b>0</b><b>0</b><b>0</b><b>0</b><b>0</b><b>0</b><b>4</b><b>0</b><b>7</b><b>9</b><b>5</b><b>0</b></div>
<div class="row mono c w555" style="left:242px;top:382.98px;color:#2a2a2a"><b>5</b><b>6</b></div>
<div class="row mono c w555" style="left:360px;top:382.98px"><i class="pp"><b>p</b><b>u</b><b>s</b><b>h</b></i><b> </b><i class="rg"><b>r</b><b>s</b><b>i</b></i></div>
<div class="row mono cmt c w555" style="left:581.7px;top:382.98px"><b>r</b><b>s</b><b>i</b><b>:</b><b>"</b><b>1</b><b>1</b><b>D</b><b>C</b><b>B</b><b>A</b><b>"</b></div>
<div class="a" style="left:110.9px;top:383.58px;width:4.8px;height:4.8px;border-radius:50%;background:#808080"></div>
<div class="row mono c w555" style="left:123px;top:391.74px;color:#a0a0a0"><b>0</b><b>0</b><b>0</b><b>0</b><b>0</b><b>0</b><b>0</b><b>0</b><b>0</b><b>0</b><b>4</b><b>0</b><b>7</b><b>9</b><b>5</b><b>1</b></div>
<div class="row mono c w555" style="left:242px;top:391.74px;color:#2a2a2a"><b>5</b><b>3</b></div>
<div class="row mono c w555" style="left:360px;top:391.74px"><i class="pp"><b>p</b><b>u</b><b>s</b><b>h</b></i><b> </b><i class="rg"><b>r</b><b>b</b><b>x</b></i></div>
<div class="a" style="left:110.9px;top:392.34px;width:4.8px;height:4.8px;border-radius:50%;background:#808080"></div>
<div class="row mono c w555" style="left:123px;top:400.49px;color:#a0a0a0"><b>0</b><b>0</b><b>0</b><b>0</b><b>0</b><b>0</b><b>0</b><b>0</b><b>0</b><b>0</b><b>4</b><b>0</b><b>7</b><b>9</b><b>5</b><b>2</b></div>
<div class="row mono c w555" style="left:242px;top:400.49px;color:#2a2a2a"><b>4</b><b>8</b><b>:</b><b>8</b><b>3</b><b>E</b><b>C</b><b> </b><b>3</b><b>8</b></div>
<div class="row mono c w555" style="left:360px;top:400.49px"><b>s</b><b>u</b><b>b</b><b> </b><i class="rg"><b>r</b><b>s</b><b>p</b></i><b>,</b><i class="v"><b>3</b><b>8</b></i></div>
<div class="a" style="left:110.9px;top:401.09px;width:4.8px;height:4.8px;border-radius:50%;background:#808080"></div>
<div class="row mono c w555" style="left:123px;top:409.25px;color:#a0a0a0"><b>0</b><b>0</b><b>0</b><b>0</b><b>0</b><b>0</b><b>0</b><b>0</b><b>0</b><b>0</b><b>4</b><b>0</b><b>7</b><b>9</b><b>5</b><b>6</b></div>
<div class="row mono c w555" style="left:242px;top:409.25px;color:#2a2a2a"><b>4</b><b>8</b><b>:</b><b>8</b><b>D</b><b>4</b><b>4</b><b>2</b><b>4</b><b> </b><b>5</b><b>8</b></div>
<div class="a" style="left:476.55px;top:407.85px;width:5.55px;height:8.76px;background:#00ffff"></div>
<div class="a" style="left:515.40px;top:407.85px;width:5.55px;height:8.76px;background:#00ffff"></div>
<div class="row mono c w555" style="left:360px;top:409.25px"><b>l</b><b>e</b><b>a</b><b> </b><i class="rg"><b>r</b><b>a</b><b>x</b></i><b>,</b><i class="sz"><b>q</b><b>w</b><b>o</b><b>r</b><b>d</b><b> </b><b>p</b><b>t</b><b>r</b></i><b> </b><i class="sg"><b>s</b><b>s</b><b>:</b></i><i class="sb"><b>[</b></i><i class="mr"><b>r</b><b>s</b><b>p</b></i><i class="op"><b>+</b></i><i class="md"><b>5</b><b>8</b></i><i class="sb"><b>]</b></i></div>
<div class="a" style="left:110.9px;top:409.85px;width:4.8px;height:4.8px;border-radius:50%;background:#808080"></div>
<div class="row mono c w555" style="left:123px;top:418.00px;color:#a0a0a0"><b>0</b><b>0</b><b>0</b><b>0</b><b>0</b><b>0</b><b>0</b><b>0</b><b>0</b><b>0</b><b>4</b><b>0</b><b>7</b><b>9</b><b>5</b><b>B</b></div>
<div class="row mono c w555" style="left:242px;top:418.00px;color:#2a2a2a"><b>4</b><b>8</b><b>:</b><b>8</b><b>9</b><b>C</b><b>B</b></div>
<div class="row mono c w555" style="left:360px;top:418.00px"><b>m</b><b>o</b><b>v</b><b> </b><i class="rg"><b>r</b><b>b</b><b>x</b></i><b>,</b><i class="rg"><b>r</b><b>c</b><b>x</b></i></div>
<div class="a" style="left:110.9px;top:418.60px;width:4.8px;height:4.8px;border-radius:50%;background:#808080"></div>
<svg class="a" style="left:0;top:0" width="260" height="440">
<g fill="none" stroke="#00bbff" stroke-width="0.9" stroke-dasharray="2,1.6">
<polyline points="108,263.39 89.6,263.39 89.6,315.92 107,315.92"/>
</g>
<path d="M105 314.12 l2.5 1.8 l-2.5 1.8" fill="none" stroke="#00bbff" stroke-width="0.9"/>
<g fill="none" stroke="#d01818" stroke-width="1.8">
<polyline points="106,272.14 80.2,272.14 80.2,333.43 109.5,333.43"/>
</g>
<path d="M104 268.94 l4.5 3.2 l-4.5 3.2" fill="none" stroke="#d01818" stroke-width="1.6"/>
<line x1="17" y1="333.43" x2="79" y2="333.43" stroke="#4040ff" stroke-width="1.2"/>
<path d="M76 330.63 l4 2.8 l-4 2.8" fill="none" stroke="#4040ff" stroke-width="1.1"/>
<rect x="0" y="329.43" width="17.3" height="8" fill="#4040ff"/>
<text x="0.5" y="336.43" font-family="Liberation Mono" font-size="8" fill="#fff" letter-spacing="0.6">RIP</text>
<g fill="none" stroke="#e83030" stroke-width="0.9">
<polyline points="240,272.14 236.9,272.14 236.9,333.43 240,333.43"/>
<path d="M230.5 262.39 l1.7 1.7 l1.7 -1.7"/>
<path d="M230.5 334.43 l1.7 -1.7 l1.7 1.7"/>
</g>
<path d="M238 270.64 l2.5 1.5 l-2.5 1.5z" fill="#e83030"/>
</svg>
<div class="a" style="left:880px;top:66.4px;width:14.5px;height:357.2px;background:#f0f0f0"></div>
<div class="a" style="left:882px;top:375.5px;width:12px;height:14px;background:#cdcdcd"></div>
<svg class="a" style="left:880px;top:66px" width="15" height="358"><path d="M5 10 l2.8-2.8 l2.8 2.8" fill="none" stroke="#555" stroke-width="1.5"/><path d="M5 349 l2.8 2.8 l2.8-2.8" fill="none" stroke="#555" stroke-width="1.5"/></svg>
<div class="a" style="left:894.5px;top:66px;width:1px;height:412px;background:#a0a0a0"></div>
<div class="a" style="left:895.5px;top:66px;width:4.5px;height:412px;background:#f0f0f0"></div>
<div class="a" style="left:896.8px;border-left:1px solid #b0b0b0;top:84px;width:3px;height:306.7px;background:#fff8f0"></div>
<div class="a" style="left:896.8px;top:390.7px;width:3.2px;height:10.3px;background:#404040"></div>
<div class="a" style="left:896.8px;top:401px;width:3.2px;height:7.5px;background:#c8c8c8"></div>
<div class="a" style="left:895.5px;top:67.5px;width:4.5px;height:16px;border:1px solid #c8c8c8;background:#f4f4f4"></div>
<div class="a" style="left:120px;top:423px;width:774.5px;height:14.2px;background:#f0f0f0"></div>
<div class="a" style="left:134.4px;top:424.5px;width:375px;height:11.5px;background:#cdcdcd"></div>
<svg class="a" style="left:120px;top:423px" width="775" height="14"><path d="M9 4 l-2.8 2.8 l2.8 2.8" fill="none" stroke="#555" stroke-width="1.5"/><path d="M753 4 l2.8 2.8 l-2.8 2.8" fill="none" stroke="#555" stroke-width="1.5"/></svg>
<div class="a" style="left:0;top:437.2px;width:894.5px;height:10.4px;background:#c0c0c0"></div>
<div class="a mono c w555" style="left:2.7px;top:439.4px"><b>u</b><b>n</b><b>t</b><b>i</b><b>t</b><b>l</b><b>e</b><b>d</b><b>.</b><b>0</b><b>0</b><b>0</b><b>0</b><b>0</b><b>0</b><b>0</b><b>0</b><b>0</b><b>0</b><b>4</b><b>0</b><b>7</b><b>9</b><b>3</b><b>4</b></div>
<div class="a" style="left:0;top:447.6px;width:894.5px;height:29.6px;background:#fff8f0"></div>
<div class="a mono c w555" style="left:3.3px;top:466.6px"><b>.</b><b>t</b><b>e</b><b>x</b><b>t</b><b>:</b><b>0</b><b>0</b><b>0</b><b>0</b><b>0</b><b>0</b><b>0</b><b>0</b><b>0</b><b>0</b><b>4</b><b>0</b><b>7</b><b>9</b><b>4</b><b>9</b><b> </b><b>u</b><b>n</b><b>t</b><b>i</b><b>t</b><b>l</b><b>e</b><b>d</b><b>.</b><b>e</b><b>x</b><b>e</b><b>:</b><b>$</b><b>7</b><b>9</b><b>4</b><b>9</b><b> </b><b>#</b><b>6</b><b>D</b><b>4</b><b>9</b></div>
<div class="a" style="left:0;top:477.2px;width:826px;height:21.2px;background:#f0f0f0;border-top:1px solid #a0a0a0"></div>
<div class="a" style="left:0;top:478.2px;width:63px;height:20px;background:#fff"></div>
<div class="tsep" style="left:63px;top:478.2px;height:19.5px"></div>
<div class="tsep" style="left:125.7px;top:478.2px;height:19.5px"></div>
<div class="tsep" style="left:189.3px;top:478.2px;height:19.5px"></div>
<div class="tsep" style="left:253px;top:478.2px;height:19.5px"></div>
<div class="tsep" style="left:316.7px;top:478.2px;height:19.5px"></div>
<div class="tsep" style="left:382px;top:478.2px;height:19.5px"></div>
<div class="tsep" style="left:451px;top:478.2px;height:19.5px"></div>
<div class="tsep" style="left:517px;top:478.2px;height:19.5px"></div>
<div class="tl" style="left:24px;top:483px"><span style="display:inline-block;width:20.00px;white-space:nowrap;letter-spacing:0;">内存</span> 1</div>
<div class="tl" style="left:87px;top:483px"><span style="display:inline-block;width:20.00px;white-space:nowrap;letter-spacing:0;">内存</span> 2</div>
<div class="tl" style="left:150px;top:483px"><span style="display:inline-block;width:20.00px;white-space:nowrap;letter-spacing:0;">内存</span> 3</div>
<div class="tl" style="left:214px;top:483px"><span style="display:inline-block;width:20.00px;white-space:nowrap;letter-spacing:0;">内存</span> 4</div>
<div class="tl" style="left:278.5px;top:483px"><span style="display:inline-block;width:20.00px;white-space:nowrap;letter-spacing:0;">内存</span> 5</div>
<div class="tl" style="left:341.6px;top:483px"><span style="display:inline-block;width:20.00px;white-space:nowrap;letter-spacing:0;">监视</span> 1</div>
<div class="tl" style="left:406px;top:483px"><span style="display:inline-block;width:40.00px;white-space:nowrap;letter-spacing:0;">局部变量</span></div>
<div class="tl" style="left:479.7px;top:483px"><span style="display:inline-block;width:30.00px;white-space:nowrap;letter-spacing:0;">结构体</span></div>
<svg class="a" style="left:0;top:478px" width="520" height="20"><rect x="8.2" y="6" width="4" height="9" rx="1" fill="#c8a840"/><rect x="12.2" y="6" width="5" height="9" rx="1" fill="#9aa0b0"/><rect x="17.2" y="6" width="3" height="9" rx="1" fill="#b8bcc8"/><rect x="71" y="6" width="4" height="9" rx="1" fill="#c8a840"/><rect x="75" y="6" width="5" height="9" rx="1" fill="#9aa0b0"/><rect x="80" y="6" width="3" height="9" rx="1" fill="#b8bcc8"/><rect x="134" y="6" width="4" height="9" rx="1" fill="#c8a840"/><rect x="138" y="6" width="5" height="9" rx="1" fill="#9aa0b0"/><rect x="143" y="6" width="3" height="9" rx="1" fill="#b8bcc8"/><rect x="198" y="6" width="4" height="9" rx="1" fill="#c8a840"/><rect x="202" y="6" width="5" height="9" rx="1" fill="#9aa0b0"/><rect x="207" y="6" width="3" height="9" rx="1" fill="#b8bcc8"/><rect x="262" y="6" width="4" height="9" rx="1" fill="#c8a840"/><rect x="266" y="6" width="5" height="9" rx="1" fill="#9aa0b0"/><rect x="271" y="6" width="3" height="9" rx="1" fill="#b8bcc8"/><circle cx="332" cy="10.5" r="6" fill="#c88a40"/><circle cx="332" cy="11" r="3.5" fill="#e8c080"/><text x="389.6" y="13.5" font-family="Liberation Serif" font-style="italic" font-size="8" fill="#555">[x=]</text><path d="M466 15 q-2-5 3-8 q4-2 5 1 q-1 3-4 3 q3 2 -1 5z" fill="none" stroke="#e05a6a" stroke-width="1.6"/></svg>
<div class="a" style="left:0;top:498px;width:826px;height:1px;background:#a0a0a0"></div>
<div class="a" style="left:0;top:498.5px;width:811px;height:11px;background:#c0c0c0;border-bottom:1px solid #a8a8a8"></div>
<div class="a" style="left:94px;top:498.5px;width:1px;height:11px;background:#888"></div>
<div class="a" style="left:362px;top:498.5px;width:1px;height:11px;background:#888"></div>
<div class="a" style="left:457.7px;top:498.5px;width:1px;height:11px;background:#888"></div>
<div class="a" style="left:0;top:509.5px;width:811px;height:130px;background:#fff8f0"></div>
<div class="a" style="left:0;top:509.5px;width:94px;height:130px;background:#fff8f0"></div>
<div class="a" style="left:94px;top:509.5px;width:1px;height:130px;background:#c0c0c0"></div>
<div class="a" style="left:161.8px;top:509.5px;width:1px;height:130px;background:#c0c0c0"></div>
<div class="a" style="left:229.3px;top:509.5px;width:1px;height:130px;background:#c0c0c0"></div>
<div class="a" style="left:296.6px;top:509.5px;width:1px;height:130px;background:#c0c0c0"></div>
<div class="a" style="left:362px;top:509.5px;width:1px;height:130px;background:#c0c0c0"></div>
<div class="a" style="left:457.7px;top:509.5px;width:1px;height:130px;background:#c0c0c0"></div>
<div class="a" style="left:3px;top:498.5px;font-size:9.5px;line-height:11px;color:#111">地址</div>
<div class="a" style="left:98px;top:498.5px;font-size:9.5px;line-height:11px;color:#111">十六进制</div>
<div class="a mono" style="left:365px;top:499.5px;color:#111">ASCII</div>
<div class="a" style="left:811px;top:498.3px;width:15px;height:140px;background:#f0f0f0"></div>
<svg class="a" style="left:811px;top:498px" width="15" height="20"><path d="M4.7 12 l2.8-2.8 l2.8 2.8" fill="none" stroke="#555" stroke-width="1.5"/></svg>
<div class="row mono c w558" style="left:2.5px;top:511.30px;color:#282828"><b>0</b><b>0</b><b>0</b><b>0</b><b>0</b><b>0</b><b>0</b><b>0</b><b>0</b><b>0</b><b>6</b><b>1</b><b>F</b><b>E</b><b>0</b><b>C</b></div>
<div class="row mono c w56" style="left:98px;top:511.30px"><i class="hp"><b>4</b><b>4</b></i><b> </b><i class="hp"><b>4</b><b>3</b></i><b> </b><i class="hp"><b>4</b><b>2</b></i><b> </b><i class="hp"><b>4</b><b>1</b></i><b> </b><i class="hx"><b>0</b><b>0</b></i><b> </b><i class="hb"><b>1</b><b>3</b></i><b> </b><i class="hb"><b>A</b><b>4</b></i><b> </b><i class="hx"><b>0</b><b>0</b></i><b> </b><i class="hx"><b>0</b><b>0</b></i><b> </b><i class="hx"><b>0</b><b>0</b></i><b> </b><i class="hx"><b>0</b><b>0</b></i><b> </b><i class="hx"><b>0</b><b>0</b></i><b> </b><i class="hb"><b>0</b><b>8</b></i><b> </b><i class="hx"><b>0</b><b>0</b></i><b> </b><i class="hx"><b>0</b><b>0</b></i><b> </b><i class="hx"><b>0</b><b>0</b></i></div>
<div class="row mono c w56" style="left:367.5px;top:511.30px"><i class="hp"><b>D</b></i><i class="hp"><b>C</b></i><i class="hp"><b>B</b></i><i class="hp"><b>A</b></i><i style="color:#4a6a4a"><b>.</b></i><i style="color:#4a6a4a"><b>.</b></i><i><b>¤</b></i><i style="color:#4a6a4a"><b>.</b></i><i style="color:#4a6a4a"><b>.</b></i><i style="color:#4a6a4a"><b>.</b></i><i style="color:#4a6a4a"><b>.</b></i><i style="color:#4a6a4a"><b>.</b></i><i style="color:#4a6a4a"><b>.</b></i><i style="color:#4a6a4a"><b>.</b></i><i style="color:#4a6a4a"><b>.</b></i><i style="color:#4a6a4a"><b>.</b></i></div>
<div class="row mono c w558" style="left:2.5px;top:520.06px;color:#282828"><b>0</b><b>0</b><b>0</b><b>0</b><b>0</b><b>0</b><b>0</b><b>0</b><b>0</b><b>0</b><b>6</b><b>1</b><b>F</b><b>E</b><b>1</b><b>C</b></div>
<div class="row mono c w56" style="left:98px;top:520.06px"><i class="hx"><b>0</b><b>0</b></i><b> </b><i class="hx"><b>0</b><b>0</b></i><b> </b><i class="hx"><b>0</b><b>0</b></i><b> </b><i class="hx"><b>0</b><b>0</b></i><b> </b><i class="hp"><b>2</b><b>6</b></i><b> </b><i class="hx"><b>0</b><b>0</b></i><b> </b><i class="hx"><b>0</b><b>0</b></i><b> </b><i class="hx"><b>0</b><b>0</b></i><b> </b><i class="hx"><b>0</b><b>0</b></i><b> </b><i class="hx"><b>0</b><b>0</b></i><b> </b><i class="hx"><b>0</b><b>0</b></i><b> </b><i class="hx"><b>0</b><b>0</b></i><b> </b><i class="hb"><b>C</b><b>7</b></i><b> </b><i class="hb"><b>1</b><b>3</b></i><b> </b><i class="hp"><b>4</b><b>0</b></i><b> </b><i class="hx"><b>0</b><b>0</b></i></div>
<div class="row mono c w56" style="left:367.5px;top:520.06px"><i style="color:#4a6a4a"><b>.</b></i><i style="color:#4a6a4a"><b>.</b></i><i style="color:#4a6a4a"><b>.</b></i><i style="color:#4a6a4a"><b>.</b></i><i class="hp"><b>&amp;</b></i><i style="color:#4a6a4a"><b>.</b></i><i style="color:#4a6a4a"><b>.</b></i><i style="color:#4a6a4a"><b>.</b></i><i style="color:#4a6a4a"><b>.</b></i><i style="color:#4a6a4a"><b>.</b></i><i style="color:#4a6a4a"><b>.</b></i><i style="color:#4a6a4a"><b>.</b></i><i><b>Ç</b></i><i style="color:#4a6a4a"><b>.</b></i><i class="hp"><b>@</b></i><i style="color:#4a6a4a"><b>.</b></i></div>
<div class="row mono c w558" style="left:2.5px;top:528.81px;color:#282828"><b>0</b><b>0</b><b>0</b><b>0</b><b>0</b><b>0</b><b>0</b><b>0</b><b>0</b><b>0</b><b>6</b><b>1</b><b>F</b><b>E</b><b>2</b><b>C</b></div>
<div class="row mono c w56" style="left:98px;top:528.81px"><i class="hx"><b>0</b><b>0</b></i><b> </b><i class="hx"><b>0</b><b>0</b></i><b> </b><i class="hx"><b>0</b><b>0</b></i><b> </b><i class="hx"><b>0</b><b>0</b></i><b> </b><i class="hx"><b>0</b><b>0</b></i><b> </b><i class="hx"><b>0</b><b>0</b></i><b> </b><i class="hx"><b>0</b><b>0</b></i><b> </b><i class="hx"><b>0</b><b>0</b></i><b> </b><i class="hx"><b>0</b><b>0</b></i><b> </b><i class="hx"><b>0</b><b>0</b></i><b> </b><i class="hx"><b>0</b><b>0</b></i><b> </b><i class="hx"><b>0</b><b>0</b></i><b> </b><i class="hp"><b>2</b><b>6</b></i><b> </b><i class="hx"><b>0</b><b>0</b></i><b> </b><i class="hx"><b>0</b><b>0</b></i><b> </b><i class="hx"><b>0</b><b>0</b></i></div>
<div class="row mono c w56" style="left:367.5px;top:528.81px"><i style="color:#4a6a4a"><b>.</b></i><i style="color:#4a6a4a"><b>.</b></i><i style="color:#4a6a4a"><b>.</b></i><i style="color:#4a6a4a"><b>.</b></i><i style="color:#4a6a4a"><b>.</b></i><i style="color:#4a6a4a"><b>.</b></i><i style="color:#4a6a4a"><b>.</b></i><i style="color:#4a6a4a"><b>.</b></i><i style="color:#4a6a4a"><b>.</b></i><i style="color:#4a6a4a"><b>.</b></i><i style="color:#4a6a4a"><b>.</b></i><i style="color:#4a6a4a"><b>.</b></i><i class="hp"><b>&amp;</b></i><i style="color:#4a6a4a"><b>.</b></i><i style="color:#4a6a4a"><b>.</b></i><i style="color:#4a6a4a"><b>.</b></i></div>
<div class="row mono c w558" style="left:2.5px;top:537.57px;color:#282828"><b>0</b><b>0</b><b>0</b><b>0</b><b>0</b><b>0</b><b>0</b><b>0</b><b>0</b><b>0</b><b>6</b><b>1</b><b>F</b><b>E</b><b>3</b><b>C</b></div>
<div class="row mono c w56" style="left:98px;top:537.57px"><i class="hx"><b>0</b><b>0</b></i><b> </b><i class="hx"><b>0</b><b>0</b></i><b> </b><i class="hx"><b>0</b><b>0</b></i><b> </b><i class="hx"><b>0</b><b>0</b></i><b> </b><i class="hp"><b>7</b><b>0</b></i><b> </b><i class="hb"><b>D</b><b>3</b></i><b> </b><i class="hp"><b>4</b><b>0</b></i><b> </b><i class="hx"><b>0</b><b>0</b></i><b> </b><i class="hx"><b>0</b><b>0</b></i><b> </b><i class="hx"><b>0</b><b>0</b></i><b> </b><i class="hx"><b>0</b><b>0</b></i><b> </b><i class="hx"><b>0</b><b>0</b></i><b> </b><i class="hx"><b>0</b><b>0</b></i><b> </b><i class="hx"><b>0</b><b>0</b></i><b> </b><i class="hx"><b>0</b><b>0</b></i><b> </b><i class="hx"><b>0</b><b>0</b></i></div>
<div class="row mono c w56" style="left:367.5px;top:537.57px"><i style="color:#4a6a4a"><b>.</b></i><i style="color:#4a6a4a"><b>.</b></i><i style="color:#4a6a4a"><b>.</b></i><i style="color:#4a6a4a"><b>.</b></i><i class="hp"><b>p</b></i><i class="hp"><b>Ó</b></i><i class="hp"><b>@</b></i><i style="color:#4a6a4a"><b>.</b></i><i style="color:#4a6a4a"><b>.</b></i><i style="color:#4a6a4a"><b>.</b></i><i style="color:#4a6a4a"><b>.</b></i><i style="color:#4a6a4a"><b>.</b></i><i style="color:#4a6a4a"><b>.</b></i><i style="color:#4a6a4a"><b>.</b></i><i style="color:#4a6a4a"><b>.</b></i><i style="color:#4a6a4a"><b>.</b></i></div>
<div class="row mono c w558" style="left:2.5px;top:546.32px;color:#282828"><b>0</b><b>0</b><b>0</b><b>0</b><b>0</b><b>0</b><b>0</b><b>0</b><b>0</b><b>0</b><b>6</b><b>1</b><b>F</b><b>E</b><b>4</b><b>C</b></div>
<div class="row mono c w56" style="left:98px;top:546.32px"><i class="hx"><b>0</b><b>0</b></i><b> </b><i class="hx"><b>0</b><b>0</b></i><b> </b><i class="hx"><b>0</b><b>0</b></i><b> </b><i class="hx"><b>0</b><b>0</b></i><b> </b><i class="hx"><b>0</b><b>0</b></i><b> </b><i class="hx"><b>0</b><b>0</b></i><b> </b><i class="hx"><b>0</b><b>0</b></i><b> </b><i class="hx"><b>0</b><b>0</b></i><b> </b><i class="hx"><b>0</b><b>0</b></i><b> </b><i class="hx"><b>0</b><b>0</b></i><b> </b><i class="hx"><b>0</b><b>0</b></i><b> </b><i class="hx"><b>0</b><b>0</b></i><b> </b><i class="hx"><b>0</b><b>0</b></i><b> </b><i class="hx"><b>0</b><b>0</b></i><b> </b><i class="hx"><b>0</b><b>0</b></i><b> </b><i class="hx"><b>0</b><b>0</b></i></div>
<div class="row mono c w56" style="left:367.5px;top:546.32px"><i style="color:#4a6a4a"><b>.</b></i><i style="color:#4a6a4a"><b>.</b></i><i style="color:#4a6a4a"><b>.</b></i><i style="color:#4a6a4a"><b>.</b></i><i style="color:#4a6a4a"><b>.</b></i><i style="color:#4a6a4a"><b>.</b></i><i style="color:#4a6a4a"><b>.</b></i><i style="color:#4a6a4a"><b>.</b></i><i style="color:#4a6a4a"><b>.</b></i><i style="color:#4a6a4a"><b>.</b></i><i style="color:#4a6a4a"><b>.</b></i><i style="color:#4a6a4a"><b>.</b></i><i style="color:#4a6a4a"><b>.</b></i><i style="color:#4a6a4a"><b>.</b></i><i style="color:#4a6a4a"><b>.</b></i><i style="color:#4a6a4a"><b>.</b></i></div>
<div class="row mono c w558" style="left:2.5px;top:555.08px;color:#282828"><b>0</b><b>0</b><b>0</b><b>0</b><b>0</b><b>0</b><b>0</b><b>0</b><b>0</b><b>0</b><b>6</b><b>1</b><b>F</b><b>E</b><b>5</b><b>C</b></div>
<div class="row mono c w56" style="left:98px;top:555.08px"><i class="hx"><b>0</b><b>0</b></i><b> </b><i class="hx"><b>0</b><b>0</b></i><b> </b><i class="hx"><b>0</b><b>0</b></i><b> </b><i class="hx"><b>0</b><b>0</b></i><b> </b><i class="hx"><b>0</b><b>0</b></i><b> </b><i class="hx"><b>0</b><b>0</b></i><b> </b><i class="hx"><b>0</b><b>0</b></i><b> </b><i class="hx"><b>0</b><b>0</b></i><b> </b><i class="hx"><b>0</b><b>0</b></i><b> </b><i class="hx"><b>0</b><b>0</b></i><b> </b><i class="hx"><b>0</b><b>0</b></i><b> </b><i class="hx"><b>0</b><b>0</b></i><b> </b><i class="hx"><b>0</b><b>0</b></i><b> </b><i class="hx"><b>0</b><b>0</b></i><b> </b><i class="hx"><b>0</b><b>0</b></i><b> </b><i class="hx"><b>0</b><b>0</b></i></div>
<div class="row mono c w558" style="left:2.5px;top:563.83px;color:#282828"><b>0</b><b>0</b><b>0</b><b>0</b><b>0</b><b>0</b><b>0</b><b>0</b><b>0</b><b>0</b><b>6</b><b>1</b><b>F</b><b>E</b><b>6</b><b>C</b></div>
<div class="row mono c w56" style="left:98px;top:563.83px"><i class="hx"><b>0</b><b>0</b></i><b> </b><i class="hx"><b>0</b><b>0</b></i><b> </b><i class="hx"><b>0</b><b>0</b></i><b> </b><i class="hx"><b>0</b><b>0</b></i><b> </b><i class="hx"><b>0</b><b>0</b></i><b> </b><i class="hx"><b>0</b><b>0</b></i><b> </b><i class="hx"><b>0</b><b>0</b></i><b> </b><i class="hx"><b>0</b><b>0</b></i><b> </b><i class="hx"><b>0</b><b>0</b></i><b> </b><i class="hx"><b>0</b><b>0</b></i><b> </b><i class="hx"><b>0</b><b>0</b></i><b> </b><i class="hx"><b>0</b><b>0</b></i><b> </b><i class="hx"><b>0</b><b>0</b></i><b> </b><i class="hx"><b>0</b><b>0</b></i><b> </b><i class="hx"><b>0</b><b>0</b></i><b> </b><i class="hx"><b>0</b><b>0</b></i></div>
<div class="row mono c w558" style="left:2.5px;top:572.59px;color:#282828"><b>0</b><b>0</b><b>0</b><b>0</b><b>0</b><b>0</b><b>0</b><b>0</b><b>0</b><b>0</b><b>6</b><b>1</b><b>F</b><b>E</b><b>7</b><b>C</b></div>
<div class="row mono c w56" style="left:98px;top:572.59px"><i class="hx"><b>0</b><b>0</b></i><b> </b><i class="hx"><b>0</b><b>0</b></i><b> </b><i class="hx"><b>0</b><b>0</b></i><b> </b><i class="hx"><b>0</b><b>0</b></i><b> </b><i class="hx"><b>0</b><b>0</b></i><b> </b><i class="hx"><b>0</b><b>0</b></i><b> </b><i class="hx"><b>0</b><b>0</b></i><b> </b><i class="hx"><b>0</b><b>0</b></i><b> </b><i class="hx"><b>0</b><b>0</b></i><b> </b><i class="hx"><b>0</b><b>0</b></i><b> </b><i class="hx"><b>0</b><b>0</b></i><b> </b><i class="hx"><b>0</b><b>0</b></i><b> </b><i class="hx"><b>0</b><b>0</b></i><b> </b><i class="hx"><b>0</b><b>0</b></i><b> </b><i class="hx"><b>0</b><b>0</b></i><b> </b><i class="hx"><b>0</b><b>0</b></i></div>
<div class="row mono c w558" style="left:2.5px;top:581.34px;color:#282828"><b>0</b><b>0</b><b>0</b><b>0</b><b>0</b><b>0</b><b>0</b><b>0</b><b>0</b><b>0</b><b>6</b><b>1</b><b>F</b><b>E</b><b>8</b><b>C</b></div>
<div class="row mono c w56" style="left:98px;top:581.34px"><i class="hx"><b>0</b><b>0</b></i><b> </b><i class="hx"><b>0</b><b>0</b></i><b> </b><i class="hx"><b>0</b><b>0</b></i><b> </b><i class="hx"><b>0</b><b>0</b></i><b> </b><i class="hx"><b>0</b><b>0</b></i><b> </b><i class="hx"><b>0</b><b>0</b></i><b> </b><i class="hx"><b>0</b><b>0</b></i><b> </b><i class="hx"><b>0</b><b>0</b></i><b> </b><i class="hx"><b>0</b><b>0</b></i><b> </b><i class="hx"><b>0</b><b>0</b></i><b> </b><i class="hx"><b>0</b><b>0</b></i><b> </b><i class="hx"><b>0</b><b>0</b></i><b> </b><i class="hx"><b>0</b><b>0</b></i><b> </b><i class="hx"><b>0</b><b>0</b></i><b> </b><i class="hx"><b>0</b><b>0</b></i><b> </b><i class="hx"><b>0</b><b>0</b></i></div>
<div class="row mono c w558" style="left:2.5px;top:590.10px;color:#282828"><b>0</b><b>0</b><b>0</b><b>0</b><b>0</b><b>0</b><b>0</b><b>0</b><b>0</b><b>0</b><b>6</b><b>1</b><b>F</b><b>E</b><b>9</b><b>C</b></div>
<div class="row mono c w56" style="left:98px;top:590.10px"><i class="hx"><b>0</b><b>0</b></i><b> </b><i class="hx"><b>0</b><b>0</b></i><b> </b><i class="hx"><b>0</b><b>0</b></i><b> </b><i class="hx"><b>0</b><b>0</b></i><b> </b><i class="hx"><b>0</b><b>0</b></i><b> </b><i class="hx"><b>0</b><b>0</b></i><b> </b><i class="hx"><b>0</b><b>0</b></i><b> </b><i class="hx"><b>0</b><b>0</b></i><b> </b><i class="hx"><b>0</b><b>0</b></i><b> </b><i class="hx"><b>0</b><b>0</b></i><b> </b><i class="hx"><b>0</b><b>0</b></i><b> </b><i class="hx"><b>0</b><b>0</b></i><b> </b><i class="hx"><b>0</b><b>0</b></i><b> </b><i class="hx"><b>0</b><b>0</b></i><b> </b><i class="hx"><b>0</b><b>0</b></i><b> </b><i class="hx"><b>0</b><b>0</b></i></div>
<div class="row mono c w558" style="left:2.5px;top:598.85px;color:#282828"><b>0</b><b>0</b><b>0</b><b>0</b><b>0</b><b>0</b><b>0</b><b>0</b><b>0</b><b>0</b><b>6</b><b>1</b><b>F</b><b>E</b><b>A</b><b>C</b></div>
<div class="row mono c w56" style="left:98px;top:598.85px"><i class="hx"><b>0</b><b>0</b></i><b> </b><i class="hx"><b>0</b><b>0</b></i><b> </b><i class="hx"><b>0</b><b>0</b></i><b> </b><i class="hx"><b>0</b><b>0</b></i><b> </b><i class="hx"><b>0</b><b>0</b></i><b> </b><i class="hx"><b>0</b><b>0</b></i><b> </b><i class="hx"><b>0</b><b>0</b></i><b> </b><i class="hx"><b>0</b><b>0</b></i><b> </b><i class="hx"><b>0</b><b>0</b></i><b> </b><i class="hx"><b>0</b><b>0</b></i><b> </b><i class="hx"><b>0</b><b>0</b></i><b> </b><i class="hx"><b>0</b><b>0</b></i><b> </b><i class="hx"><b>0</b><b>0</b></i><b> </b><i class="hx"><b>0</b><b>0</b></i><b> </b><i class="hx"><b>0</b><b>0</b></i><b> </b><i class="hx"><b>0</b><b>0</b></i></div>
<div class="row mono c w558" style="left:2.5px;top:607.61px;color:#282828"><b>0</b><b>0</b><b>0</b><b>0</b><b>0</b><b>0</b><b>0</b><b>0</b><b>0</b><b>0</b><b>6</b><b>1</b><b>F</b><b>E</b><b>B</b><b>C</b></div>
<div class="row mono c w56" style="left:98px;top:607.61px"><i class="hx"><b>0</b><b>0</b></i><b> </b><i class="hx"><b>0</b><b>0</b></i><b> </b><i class="hx"><b>0</b><b>0</b></i><b> </b><i class="hx"><b>0</b><b>0</b></i><b> </b><i class="hx"><b>0</b><b>0</b></i><b> </b><i class="hx"><b>0</b><b>0</b></i><b> </b><i class="hx"><b>0</b><b>0</b></i><b> </b><i class="hx"><b>0</b><b>0</b></i><b> </b><i class="hx"><b>0</b><b>0</b></i><b> </b><i class="hx"><b>0</b><b>0</b></i><b> </b><i class="hx"><b>0</b><b>0</b></i><b> </b><i class="hx"><b>0</b><b>0</b></i><b> </b><i class="hx"><b>0</b><b>0</b></i><b> </b><i class="hx"><b>0</b><b>0</b></i><b> </b><i class="hx"><b>0</b><b>0</b></i><b> </b><i class="hx"><b>0</b><b>0</b></i></div>
<div class="row mono c w558" style="left:2.5px;top:616.36px;color:#282828"><b>0</b><b>0</b><b>0</b><b>0</b><b>0</b><b>0</b><b>0</b><b>0</b><b>0</b><b>0</b><b>6</b><b>1</b><b>F</b><b>E</b><b>C</b><b>C</b></div>
<div class="row mono c w56" style="left:98px;top:616.36px"><i class="hx"><b>0</b><b>0</b></i><b> </b><i class="hx"><b>0</b><b>0</b></i><b> </b><i class="hx"><b>0</b><b>0</b></i><b> </b><i class="hx"><b>0</b><b>0</b></i><b> </b><i class="hx"><b>0</b><b>0</b></i><b> </b><i class="hx"><b>0</b><b>0</b></i><b> </b><i class="hx"><b>0</b><b>0</b></i><b> </b><i class="hx"><b>0</b><b>0</b></i><b> </b><i class="hx"><b>0</b><b>0</b></i><b> </b><i class="hx"><b>0</b><b>0</b></i><b> </b><i class="hx"><b>0</b><b>0</b></i><b> </b><i class="hx"><b>0</b><b>0</b></i><b> </b><i class="hx"><b>0</b><b>0</b></i><b> </b><i class="hx"><b>0</b><b>0</b></i><b> </b><i class="hx"><b>0</b><b>0</b></i><b> </b><i class="hx"><b>0</b><b>0</b></i></div>
<div class="row mono c w558" style="left:2.5px;top:625.12px;color:#282828"><b>0</b><b>0</b><b>0</b><b>0</b><b>0</b><b>0</b><b>0</b><b>0</b><b>0</b><b>0</b><b>6</b><b>1</b><b>F</b><b>E</b><b>D</b><b>C</b></div>
<div class="row mono c w56" style="left:98px;top:625.12px"><i class="hx"><b>0</b><b>0</b></i><b> </b><i class="hx"><b>0</b><b>0</b></i><b> </b><i class="hx"><b>0</b><b>0</b></i><b> </b><i class="hx"><b>0</b><b>0</b></i><b> </b><i class="hx"><b>0</b><b>0</b></i><b> </b><i class="hx"><b>0</b><b>0</b></i><b> </b><i class="hx"><b>0</b><b>0</b></i><b> </b><i class="hx"><b>0</b><b>0</b></i><b> </b><i class="hx"><b>0</b><b>0</b></i><b> </b><i class="hx"><b>0</b><b>0</b></i><b> </b><i class="hx"><b>0</b><b>0</b></i><b> </b><i class="hx"><b>0</b><b>0</b></i><b> </b><i class="hx"><b>0</b><b>0</b></i><b> </b><i class="hx"><b>0</b><b>0</b></i><b> </b><i class="hx"><b>0</b><b>0</b></i><b> </b><i class="hx"><b>0</b><b>0</b></i></div>
<div class="row mono c w558" style="left:2.5px;top:633.87px;color:#282828"><b>0</b><b>0</b><b>0</b><b>0</b><b>0</b><b>0</b><b>0</b><b>0</b><b>0</b><b>0</b><b>6</b><b>1</b><b>F</b><b>E</b><b>E</b><b>C</b></div>
<div class="row mono c w56" style="left:98px;top:633.87px"><i class="hx"><b>0</b><b>0</b></i><b> </b><i class="hx"><b>0</b><b>0</b></i><b> </b><i class="hx"><b>0</b><b>0</b></i><b> </b><i class="hx"><b>0</b><b>0</b></i><b> </b><i class="hx"><b>0</b><b>0</b></i><b> </b><i class="hx"><b>0</b><b>0</b></i><b> </b><i class="hx"><b>0</b><b>0</b></i><b> </b><i class="hx"><b>0</b><b>0</b></i><b> </b><i class="hx"><b>0</b><b>0</b></i><b> </b><i class="hx"><b>0</b><b>0</b></i><b> </b><i class="hx"><b>0</b><b>0</b></i><b> </b><i class="hx"><b>0</b><b>0</b></i><b> </b><i class="hx"><b>0</b><b>0</b></i><b> </b><i class="hx"><b>0</b><b>0</b></i><b> </b><i class="hx"><b>0</b><b>0</b></i><b> </b><i class="hx"><b>0</b><b>0</b></i></div>
<div class="a" style="left:97px;top:511.30px;width:12px;height:8.755px;background:rgba(160,150,200,0.35)"></div>
<div class="a" style="left:826px;top:478px;width:74px;height:160px;background:#fff8f0;border-left:1px solid #a0a0a0"></div>
<div class="a" style="left:827.8px;top:479.3px;width:73px;height:8.755px;background:#000"></div>
<div class="row mono c w55" style="left:830.8px;top:480.30px;color:#fff"><b>0</b><b>0</b><b>0</b><b>0</b><b>0</b><b>0</b><b>0</b><b>0</b><b>0</b><b>0</b><b>6</b><b>1</b><b>F</b><b>E</b><b>0</b><b>8</b></div>
<div class="row mono c w55" style="left:830.8px;top:489.06px;color:#e03030"><b>0</b><b>0</b><b>0</b><b>0</b><b>0</b><b>0</b><b>0</b><b>0</b><b>0</b><b>0</b><b>6</b><b>1</b><b>F</b><b>E</b><b>0</b><b>8</b></div>
<div class="row mono c w55" style="left:830.8px;top:497.81px;color:#e03030"><b>0</b><b>0</b><b>0</b><b>0</b><b>0</b><b>0</b><b>0</b><b>0</b><b>0</b><b>0</b><b>6</b><b>1</b><b>F</b><b>E</b><b>0</b><b>8</b></div>
<div class="row mono c w55" style="left:830.8px;top:506.56px;color:#808080"><b>0</b><b>0</b><b>0</b><b>0</b><b>0</b><b>0</b><b>0</b><b>0</b><b>0</b><b>0</b><b>6</b><b>1</b><b>F</b><b>E</b><b>0</b><b>8</b></div>
<div class="row mono c w55" style="left:830.8px;top:515.32px;color:#808080"><b>0</b><b>0</b><b>0</b><b>0</b><b>0</b><b>0</b><b>0</b><b>0</b><b>0</b><b>0</b><b>6</b><b>1</b><b>F</b><b>E</b><b>0</b><b>8</b></div>
<div class="row mono c w55" style="left:830.8px;top:524.08px;color:#808080"><b>0</b><b>0</b><b>0</b><b>0</b><b>0</b><b>0</b><b>0</b><b>0</b><b>0</b><b>0</b><b>6</b><b>1</b><b>F</b><b>E</b><b>0</b><b>8</b></div>
<div class="row mono c w55" style="left:830.8px;top:532.83px;color:#808080"><b>0</b><b>0</b><b>0</b><b>0</b><b>0</b><b>0</b><b>0</b><b>0</b><b>0</b><b>0</b><b>6</b><b>1</b><b>F</b><b>E</b><b>0</b><b>8</b></div>
<div class="row mono c w55" style="left:830.8px;top:541.59px;color:#808080"><b>0</b><b>0</b><b>0</b><b>0</b><b>0</b><b>0</b><b>0</b><b>0</b><b>0</b><b>0</b><b>6</b><b>1</b><b>F</b><b>E</b><b>0</b><b>8</b></div>
<div class="row mono c w55" style="left:830.8px;top:550.34px;color:#808080"><b>0</b><b>0</b><b>0</b><b>0</b><b>0</b><b>0</b><b>0</b><b>0</b><b>0</b><b>0</b><b>6</b><b>1</b><b>F</b><b>E</b><b>0</b><b>8</b></div>
<div class="a" style="left:151.6px;top:552.4px;width:749px;height:86px;border:1px solid #8a8a8a;border-right:none;border-bottom:none;background:#fff"></div>
<div class="a" style="left:152.6px;top:577px;width:748px;height:61px;background:#0c0c0c"></div>
<svg class="a" style="left:159px;top:559px" width="14" height="11"><rect x="0.5" y="0.5" width="11.5" height="9" fill="#fff" stroke="#7a8a9a" stroke-width="0.9"/><rect x="1.5" y="2.5" width="3" height="6" fill="#3a6a8a"/><rect x="5" y="2.5" width="6" height="6" fill="#b8c8d4"/></svg>
<div class="a" style="left:176.4px;top:558.5px;font-size:10.3px;line-height:12px;color:#222;white-space:nowrap">C:\Users\Reverse\Desktop\untitled.exe</div>
<div class="a" style="left:835px;top:564.2px;width:9px;height:1.2px;background:#222"></div>
<div class="a" style="left:871px;top:559.5px;width:8.5px;height:8.5px;border:1px solid #222"></div>
<div class="a c w638" style="left:152px;top:578.2px;font-family:'Liberation Mono',monospace;font-size:10.65px;line-height:12.8px;color:#c0c0c0;white-space:pre"><b>b</b><b>u</b><b>f</b><b>:</b><b> </b><b>0</b><b>0</b><b>6</b><b>1</b><b>f</b><b>e</b><b>0</b><b>a</b><b> </b><b>c</b><b>o</b><b>o</b><b>k</b><b>i</b><b>e</b><b>:</b><b> </b><b>0</b><b>0</b><b>6</b><b>1</b><b>f</b><b>e</b><b>0</b><b>c</b><br><span style="display:inline-block;width:114.75px;white-space:nowrap;font-size:12.2px;vertical-align:top;line-height:12.8px">两变量内存地址之差</span><b>=</b><b>2</b><br><b>1</b><b>1</b><b>D</b><b>C</b><b>B</b><b>A</b><br><span style="display:inline-block;width:89.25px;white-space:nowrap;font-size:12.2px;vertical-align:top;line-height:12.8px">缓冲区溢出成功</span><b>!</b></div>
<div class="a" style="left:716px;top:607px;font-size:18px;line-height:22px;color:#fff;white-space:nowrap">SecIN@梦幻的彼岸</div>
<svg class="a" style="left:0;top:0" width="900" height="638">
<g stroke="#0000d8" stroke-width="2.3" stroke-linecap="round" fill="none">
<line x1="356.3" y1="330.3" x2="253" y2="604"/>
<line x1="619.8" y1="322.1" x2="268" y2="611"/>
</g>
<ellipse cx="0" cy="0" rx="5.5" ry="3.2" fill="#0000f0" transform="translate(254.3 602.3) rotate(110.6)"/>
<ellipse cx="0" cy="0" rx="5.5" ry="3.2" fill="#0000f0" transform="translate(268.6 610.6) rotate(140.5)"/>
</svg>
</body></html>
